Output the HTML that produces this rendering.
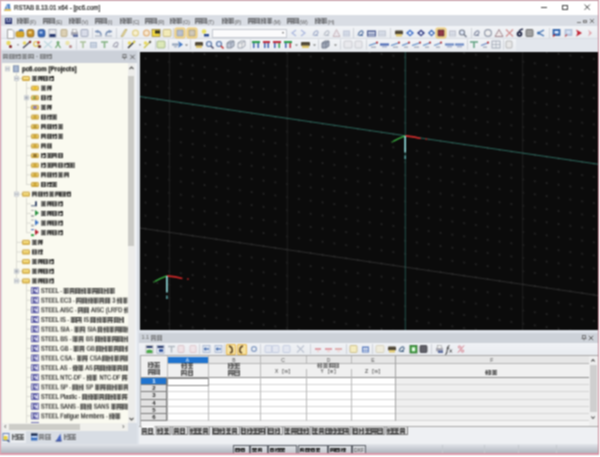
<!DOCTYPE html><html><head><meta charset="utf-8"><style>
*{margin:0;padding:0;box-sizing:border-box}
html,body{width:600px;height:457px;overflow:hidden;background:#fff;font-family:"Liberation Sans",sans-serif}
.a{position:absolute}
.cj{display:inline-block;vertical-align:top}
.g0{background:linear-gradient(currentColor,currentColor) 0 0/100% 1.3px no-repeat,linear-gradient(currentColor,currentColor) 0 100%/100% 1.3px no-repeat,linear-gradient(currentColor,currentColor) 0 0/1.3px 100% no-repeat,linear-gradient(currentColor,currentColor) 100% 0/1.3px 100% no-repeat,linear-gradient(currentColor,currentColor) 0 50%/100% 1.3px no-repeat,rgba(70,70,70,.35)}
.g1{background:linear-gradient(currentColor,currentColor) 10% 0/1.3px 100% no-repeat,linear-gradient(currentColor,currentColor) 100% 0/1.3px 100% no-repeat,linear-gradient(currentColor,currentColor) 100% 0/55% 1.3px no-repeat,linear-gradient(currentColor,currentColor) 100% 100%/55% 1.3px no-repeat,linear-gradient(currentColor,currentColor) 0 45%/100% 1.3px no-repeat,rgba(70,70,70,.35)}
.g2{background:linear-gradient(currentColor,currentColor) 0 0/100% 1.3px no-repeat,linear-gradient(currentColor,currentColor) 0 100%/100% 1.3px no-repeat,linear-gradient(currentColor,currentColor) 0 50%/100% 1.3px no-repeat,linear-gradient(currentColor,currentColor) 50% 0/1.3px 100% no-repeat,rgba(70,70,70,.35)}
.g3{background:linear-gradient(currentColor,currentColor) 0 0/1.3px 100% no-repeat,linear-gradient(currentColor,currentColor) 100% 0/1.3px 100% no-repeat,linear-gradient(currentColor,currentColor) 0 0/100% 1.3px no-repeat,linear-gradient(currentColor,currentColor) 50% 30%/1.3px 70% no-repeat,linear-gradient(currentColor,currentColor) 0 70%/100% 1.3px no-repeat,rgba(70,70,70,.35)}
.t{position:absolute;white-space:nowrap;font-size:6px;line-height:6px;color:#333}
.ic{position:absolute;border-radius:1px}
</style></head><body><svg width="0" height="0" style="position:absolute"><filter id="soft" x="0" y="0" width="100%" height="100%" color-interpolation-filters="sRGB"><feConvolveMatrix order="3" kernelMatrix="1 2 1 2 4 2 1 2 1" divisor="16" edgeMode="duplicate"/></filter></svg><div id="w" style="position:absolute;left:0;top:0;width:600px;height:457px;filter:url(#soft)">
<div class="a" style="left:0px;top:0px;width:599px;height:455px;border:1px solid #dca8b4;border-top-color:#c8a0aa;border-right-color:#cc8494;border-bottom:2px solid #dc98aa;background:#fff"></div>
<svg class="a" style="left:3px;top:3px" width="9" height="9" viewBox="0 0 9 9"><path d="M1 8 L3.5 1 H7 L7.5 8 z" fill="#5a8ac8"/><path d="M1 8 h7 v-2 h-6 z" fill="#e0c060"/><path d="M3.5 1 L4.5 6" stroke="#c8dcf0" stroke-width="1"/></svg>
<div class="t" style="left:14px;top:5px;font-size:7px;line-height:6px;color:#1a1a1a;-webkit-text-stroke:0.2px #1a1a1a;transform:scaleX(.88);transform-origin:0 0">RSTAB 8.13.01 x64 - [pc6.com]</div>
<div class="a" style="left:541px;top:7px;width:5.5px;height:0.8px;background:#444"></div>
<div class="a" style="left:562px;top:4.5px;width:5.5px;height:5.5px;border:0.8px solid #444"></div>
<svg class="a" style="left:0;top:0" width="600" height="457"><path d="M584.5 4.5 L589.9000000000001 9.9 M589.9000000000001 4.5 L584.5 9.9" stroke="#333" stroke-width="0.9"/></svg>
<div class="a" style="left:1px;top:15px;width:597px;height:11px;background:#d9dde4"></div>
<div class="a" style="left:4.5px;top:17.5px;width:7.5px;height:6px;background:#2a3470"></div>
<div class="a" style="left:5.5px;top:19.3px;width:2.5px;height:1px;background:#e8ecf8"></div>
<div class="a" style="left:8.5px;top:19.3px;width:2.5px;height:1px;background:#e8ecf8"></div>
<div class="a" style="left:5.5px;top:21.3px;width:5.5px;height:0.8px;background:#a0a8d0"></div>
<div class="t" style="left:17px;top:18px;"><i class="cj g1" style="width:5.5px;height:5.6px;margin-right:0.8px;color:#222;opacity:0.6"></i><i class="cj g2" style="width:5.5px;height:5.6px;margin-right:0.8px;color:#222;opacity:0.6"></i><span style="font-size:5px;line-height:5px;color:#555;vertical-align:top;margin-top:1.5px;display:inline-block">(F)</span></div>
<div class="t" style="left:43px;top:18px;"><i class="cj g3" style="width:5.5px;height:5.6px;margin-right:0.8px;color:#222;opacity:0.6"></i><i class="cj g0" style="width:5.5px;height:5.6px;margin-right:0.8px;color:#222;opacity:0.6"></i><span style="font-size:5px;line-height:5px;color:#555;vertical-align:top;margin-top:1.5px;display:inline-block">(E)</span></div>
<div class="t" style="left:69px;top:18px;"><i class="cj g1" style="width:5.5px;height:5.6px;margin-right:0.8px;color:#222;opacity:0.6"></i><i class="cj g2" style="width:5.5px;height:5.6px;margin-right:0.8px;color:#222;opacity:0.6"></i><span style="font-size:5px;line-height:5px;color:#555;vertical-align:top;margin-top:1.5px;display:inline-block">(V)</span></div>
<div class="t" style="left:95px;top:18px;"><i class="cj g3" style="width:5.5px;height:5.6px;margin-right:0.8px;color:#222;opacity:0.6"></i><i class="cj g0" style="width:5.5px;height:5.6px;margin-right:0.8px;color:#222;opacity:0.6"></i><span style="font-size:5px;line-height:5px;color:#555;vertical-align:top;margin-top:1.5px;display:inline-block">(I)</span></div>
<div class="t" style="left:120px;top:18px;"><i class="cj g1" style="width:5.5px;height:5.6px;margin-right:0.8px;color:#222;opacity:0.6"></i><i class="cj g2" style="width:5.5px;height:5.6px;margin-right:0.8px;color:#222;opacity:0.6"></i><span style="font-size:5px;line-height:5px;color:#555;vertical-align:top;margin-top:1.5px;display:inline-block">(C)</span></div>
<div class="t" style="left:145px;top:18px;"><i class="cj g3" style="width:5.5px;height:5.6px;margin-right:0.8px;color:#222;opacity:0.6"></i><i class="cj g0" style="width:5.5px;height:5.6px;margin-right:0.8px;color:#222;opacity:0.6"></i><span style="font-size:5px;line-height:5px;color:#555;vertical-align:top;margin-top:1.5px;display:inline-block">(R)</span></div>
<div class="t" style="left:170px;top:18px;"><i class="cj g1" style="width:5.5px;height:5.6px;margin-right:0.8px;color:#222;opacity:0.6"></i><i class="cj g2" style="width:5.5px;height:5.6px;margin-right:0.8px;color:#222;opacity:0.6"></i><span style="font-size:5px;line-height:5px;color:#555;vertical-align:top;margin-top:1.5px;display:inline-block">(O)</span></div>
<div class="t" style="left:195px;top:18px;"><i class="cj g3" style="width:5.5px;height:5.6px;margin-right:0.8px;color:#222;opacity:0.6"></i><i class="cj g0" style="width:5.5px;height:5.6px;margin-right:0.8px;color:#222;opacity:0.6"></i><span style="font-size:5px;line-height:5px;color:#555;vertical-align:top;margin-top:1.5px;display:inline-block">(T)</span></div>
<div class="t" style="left:222px;top:18px;"><i class="cj g1" style="width:5.5px;height:5.6px;margin-right:0.8px;color:#222;opacity:0.6"></i><i class="cj g2" style="width:5.5px;height:5.6px;margin-right:0.8px;color:#222;opacity:0.6"></i><span style="font-size:5px;line-height:5px;color:#555;vertical-align:top;margin-top:1.5px;display:inline-block">(P)</span></div>
<div class="t" style="left:248px;top:18px;"><i class="cj g3" style="width:5.5px;height:5.6px;margin-right:0.8px;color:#222;opacity:0.6"></i><i class="cj g0" style="width:5.5px;height:5.6px;margin-right:0.8px;color:#222;opacity:0.6"></i><i class="cj g1" style="width:5.5px;height:5.6px;margin-right:0.8px;color:#222;opacity:0.6"></i><i class="cj g2" style="width:5.5px;height:5.6px;margin-right:0.8px;color:#222;opacity:0.6"></i><span style="font-size:5px;line-height:5px;color:#555;vertical-align:top;margin-top:1.5px;display:inline-block">(M)</span></div>
<div class="t" style="left:287px;top:18px;"><i class="cj g3" style="width:5.5px;height:5.6px;margin-right:0.8px;color:#222;opacity:0.6"></i><i class="cj g0" style="width:5.5px;height:5.6px;margin-right:0.8px;color:#222;opacity:0.6"></i><span style="font-size:5px;line-height:5px;color:#555;vertical-align:top;margin-top:1.5px;display:inline-block">(W)</span></div>
<div class="t" style="left:315px;top:18px;"><i class="cj g1" style="width:5.5px;height:5.6px;margin-right:0.8px;color:#222;opacity:0.6"></i><i class="cj g2" style="width:5.5px;height:5.6px;margin-right:0.8px;color:#222;opacity:0.6"></i><span style="font-size:5px;line-height:5px;color:#555;vertical-align:top;margin-top:1.5px;display:inline-block">(H)</span></div>
<div class="a" style="left:577px;top:22px;width:4px;height:1px;background:#777"></div>
<div class="a" style="left:583px;top:20px;width:4px;height:3px;border:1px solid #777"></div>
<svg class="a" style="left:0;top:0" width="600" height="457"><path d="M590 19 L594 23 M594 19 L590 23" stroke="#666" stroke-width="0.9"/></svg>
<div class="a" style="left:1px;top:26px;width:597px;height:26px;background:#e3e7ed"></div>
<div class="a" style="left:1px;top:26px;width:596px;height:12px;background:linear-gradient(#f2f4f7,#e9ecf0)"></div>
<div class="a" style="left:1px;top:39px;width:515px;height:12px;background:linear-gradient(#f2f4f7,#e9ecf0)"></div>
<div class="a" style="left:1px;top:38px;width:597px;height:1px;background:#d8dce3"></div>
<svg class="a" style="left:0;top:0" width="600" height="60" viewBox="0 0 600 60"><path d="M7.5 29.5 h4.5 l2 2 v7 h-6.5 z" fill="#fbfbfb" stroke="#8a8a8a" stroke-width="0.8"/><rect x="16" y="31.5" width="8" height="5.5" rx="1.5" fill="#d8a828" stroke="#a07818" stroke-width="0.6"/><path d="M19 31.0 q2 -2 4.5 0" stroke="#3a6ab8" stroke-width="1.2" fill="none"/><rect x="27" y="29.5" width="7" height="7.5" rx="2" fill="#c89028" stroke="#6a4a10" stroke-width="0.6"/><rect x="28.5" y="31.5" width="3" height="2" fill="#f8e090"/><rect x="38" y="29.5" width="7" height="7.5" rx="2" fill="#3868b8" stroke="#20407a" stroke-width="0.6"/><rect x="39.5" y="31.5" width="3" height="2" fill="#b8d0f0"/><rect x="49" y="29.5" width="7" height="7.5" fill="#e8e8ec" stroke="#9098a8" stroke-width="0.7"/><rect x="49.5" y="34.0" width="6" height="3" fill="#2a3a70"/><rect x="61" y="29.5" width="6" height="7" rx="1" fill="#dcd0b4" stroke="#a89870" stroke-width="0.7"/><rect x="71" y="31.5" width="7" height="4" rx="1" fill="#a8a8b4"/><rect x="72.5" y="29.5" width="4" height="3" fill="#f4f4f4" stroke="#909090" stroke-width="0.5"/><rect x="73" y="34.5" width="5" height="2.5" fill="#6070a0"/><rect x="81" y="29.5" width="7" height="7" rx="1" fill="#d8dce8" stroke="#8890a8" stroke-width="0.7"/><rect x="92" y="28" width="0.8" height="10" fill="#c8ccd4"/><path d="M101 35.5 q0 -4 -3 -4 h-3" stroke="#7088b0" stroke-width="1.4" fill="none"/><path d="M96 31.5 l2.2 -2 v4 z" fill="#7088b0"/><rect x="95" y="35.5" width="7" height="1" fill="#a0a8b8"/><path d="M106 35.5 q0 -4 3 -4 h3" stroke="#7088b0" stroke-width="1.4" fill="none"/><path d="M111 31.5 l-2.2 -2 v4 z" fill="#7088b0"/><rect x="105" y="35.5" width="7" height="1" fill="#a0a8b8"/><rect x="116" y="28" width="0.8" height="10" fill="#c8ccd4"/><path d="M121 36.5 l4 -7 h2 l-4 7 z" fill="#f0e0a0" stroke="#a09050" stroke-width="0.6"/><circle cx="135.5" cy="33" r="2.9" fill="#f8f0d0" stroke="#e0d088" stroke-width="1.2"/><circle cx="146.5" cy="33" r="2.9" fill="#f8e8d0" stroke="#e0b078" stroke-width="1.2"/><rect x="152" y="29.5" width="8" height="7" fill="#f0d840" stroke="#806820" stroke-width="0.6"/><rect x="155" y="30.5" width="5" height="3" fill="#303020"/><rect x="163" y="29.5" width="8" height="7" rx="1" fill="#f2eab8" stroke="#b8a868" stroke-width="0.7"/><rect x="173" y="28" width="0.8" height="10" fill="#c8ccd4"/><rect x="175" y="28" width="10" height="10" rx="1.5" fill="#f6e2a0" stroke="#e8b850" stroke-width="0.8"/><rect x="177" y="30" width="6" height="6" fill="#b8c0d0" stroke="#808898" stroke-width="0.6"/><rect x="187" y="28" width="10" height="10" rx="1.5" fill="#f6e2a0" stroke="#e8b850" stroke-width="0.8"/><rect x="189" y="30" width="6" height="6" fill="#d0c8b8" stroke="#908060" stroke-width="0.6"/><circle cx="204" cy="31.5" r="2.3" fill="#e8e060"/><rect x="204" y="34" width="5" height="2.5" fill="#2a4a90"/><path d="M296 30.0 l-4 3 l4 3" stroke="#98a8d8" stroke-width="1.2" fill="none" opacity="0.8"/><path d="M301 30.0 l4 3 l-4 3" stroke="#98a8d8" stroke-width="1.2" fill="none" opacity="0.8"/><path d="M313 35.5 c1 -5 5 -6 5 -3 c0 2 -3 3 -4 3 h4" stroke="#8090b8" stroke-width="1.2" fill="none" opacity="0.7"/><path d="M324 35.5 c1 -5 5 -6 5 -3 c0 2 -3 3 -4 3 h4" stroke="#9098a8" stroke-width="1.2" fill="none" opacity="0.6"/><path d="M336.5 29.5 L340 36.5 H333 z" fill="#e8e0e8" stroke="#b09098" stroke-width="1" opacity="0.6"/><rect x="343" y="30.5" width="7" height="6" fill="#a8b0c8" opacity="0.6"/><rect x="344" y="32.0" width="5" height="1.5" fill="#e8eef8" opacity="0.6"/><rect x="344" y="34.5" width="5" height="1" fill="#e8eef8" opacity="0.6"/><rect x="353" y="28" width="0.8" height="10" fill="#c8ccd4"/><path d="M358 35.5 c1 -5 5 -6 5 -3 c0 2 -3 3 -4 3 h4" stroke="#5070a0" stroke-width="1.2" fill="none"/><rect x="367" y="30.5" width="9" height="6" fill="#4a5a90"/><rect x="368" y="32.0" width="7" height="1.5" fill="#e8eef8"/><rect x="368" y="34.5" width="7" height="1" fill="#e8eef8"/><rect x="378" y="30.5" width="8" height="6" fill="#b0b8c8" opacity="0.7"/><rect x="379" y="32.0" width="6" height="1.5" fill="#e8eef8" opacity="0.7"/><rect x="379" y="34.5" width="6" height="1" fill="#e8eef8" opacity="0.7"/><rect x="390" y="28" width="0.8" height="10" fill="#c8ccd4"/><rect x="395" y="30.5" width="8" height="4" rx="1" fill="#504838"/><rect x="396" y="34.0" width="6" height="2.5" fill="#e0c870"/><path d="M410.0 29.5 L414 33 L410.0 36.5 L406 33 z" fill="#4070c8"/><circle cx="410.0" cy="33" r="1.5" fill="#e8f0ff"/><path d="M421.0 29.5 L425 33 L421.0 36.5 L417 33 z" fill="#303a80"/><circle cx="421.0" cy="33" r="1.5" fill="#e8f0ff"/><path d="M431.5 29.5 L435 33 L431.5 36.5 L428 33 z" fill="#3060b0"/><circle cx="431.5" cy="33" r="1.5" fill="#e8f0ff"/><rect x="436" y="28" width="10" height="10" rx="1.5" fill="#f6e2a0" stroke="#e8b850" stroke-width="0.8"/><rect x="438" y="30" width="6" height="6" fill="#903848" stroke="#402020" stroke-width="0.6"/><rect x="449" y="30.5" width="7" height="6" fill="#b8bcc8" opacity="0.8"/><rect x="450" y="32.0" width="5" height="1.5" fill="#e8eef8" opacity="0.8"/><rect x="450" y="34.5" width="5" height="1" fill="#e8eef8" opacity="0.8"/><circle cx="462" cy="32.5" r="2.5" fill="#e0e8f8" stroke="#707888" stroke-width="1.1"/><path d="M464 34.5 l2.5 2.5" stroke="#707888" stroke-width="1.4"/><rect x="471" y="28" width="0.8" height="10" fill="#c8ccd4"/><path d="M474 35.5 c1 -5 5 -6 5 -3 c0 2 -3 3 -4 3 h4" stroke="#8088a0" stroke-width="1.2" fill="none"/><circle cx="488.0" cy="33" r="3.4" fill="#f0f0f0" stroke="#9098a8" stroke-width="1.2"/><path d="M499.0 29.5 L503 36.5 H495 z" fill="#f0e8e8" stroke="#a08890" stroke-width="1"/><path d="M506 29.5 L513 36.5 M513 29.5 L506 36.5" stroke="#d08888" stroke-width="1.1"/><circle cx="519.5" cy="34" r="2.8" fill="#1a2040"/><path d="M519 31.5 q2 -3 4 -2" stroke="#1a2040" stroke-width="1.4" fill="none"/><circle cx="519.5" cy="34" r="1" fill="#e0e0e0"/><rect x="526" y="29.5" width="7" height="7" rx="1" fill="#a0a0a0" stroke="#505050" stroke-width="0.7"/><path d="M544 30.0 L538.5 33 L544 36.0" stroke="#4070b0" stroke-width="1.4" fill="none"/><circle cx="538.5" cy="33" r="1.5" fill="#4070b0"/><rect x="549" y="28" width="0.8" height="10" fill="#c8ccd4"/><rect x="553" y="29.5" width="7" height="6" fill="#2a68b8" stroke="#1a4890" stroke-width="0.6"/><rect x="554.5" y="31.0" width="4" height="2.5" fill="#e8f0ff"/><path d="M553 36.5 l2 -2" stroke="#c02020" stroke-width="1.2"/><rect x="565" y="29.5" width="7" height="6" fill="#a0b8d8" stroke="#8098c0" stroke-width="0.6" opacity="0.7"/><rect x="566.5" y="31.0" width="4" height="2.5" fill="#e8f0ff" opacity="0.7"/><path d="M565 36.5 l2 -2" stroke="#c02020" stroke-width="1.2" opacity="0.7"/><path d="M576 29.5 L582 33 L576 36.5 L577.5 33 z" fill="#c02030"/><path d="M588 29.5 L592 33 L588 36.5 L589.5 33 z" fill="#e0a0a8"/><circle cx="8.5" cy="43.0" r="2.2" fill="#e8d860"/><circle cx="10.5" cy="46.5" r="1.5" fill="#802020"/><path d="M17 44.8 h2" stroke="#707070" stroke-width="0.8"/><path d="M23 48.0 L31 41.0" stroke="#404050" stroke-width="1.3"/><circle cx="24.5" cy="43.0" r="1.8" fill="#e8d860"/><circle cx="30" cy="42.0" r="1.2" fill="#802020"/><circle cx="36" cy="44.0" r="2.3" fill="none" stroke="#e0c860" stroke-width="1.3"/><circle cx="39.5" cy="46.5" r="1.6" fill="#603030"/><circle cx="38.5" cy="42.5" r="1.2" fill="#c02020"/><path d="M44 41.0 L52 48.0 M52 41.0 L44 48.0" stroke="#b0d0d8" stroke-width="1.1" opacity="0.8"/><circle cx="58.0" cy="42.5" r="1.5" fill="#70a870"/><path d="M55.5 48.0 L58.0 44.0 L60.5 48.0" stroke="#70a870" stroke-width="1.3" fill="none"/><circle cx="67.5" cy="43.0" r="2.2" fill="#e8d860" opacity="0.5"/><circle cx="70.5" cy="46.5" r="1.5" fill="#802020" opacity="0.5"/><rect x="76" y="39.5" width="0.8" height="10" fill="#c8ccd4"/><path d="M80 42.0 H86 M83.0 42.0 V48.0" stroke="#a8c098" stroke-width="1.5"/><rect x="90" y="42.0" width="7" height="6" fill="#98a8c0" opacity="0.7"/><rect x="91" y="43.5" width="5" height="1.5" fill="#e8eef8" opacity="0.7"/><rect x="91" y="46.0" width="5" height="1" fill="#e8eef8" opacity="0.7"/><path d="M101 42.0 H108 M104.5 42.0 V48.0" stroke="#80b080" stroke-width="1.5"/><path d="M113 47.0 c1 -5 5 -6 5 -3 c0 2 -3 3 -4 3 h4" stroke="#a0a0b0" stroke-width="1.2" fill="none"/><rect x="122" y="39.5" width="0.8" height="10" fill="#c8ccd4"/><path d="M128 48.0 L135 41.0" stroke="#202020" stroke-width="1.3"/><circle cx="129.5" cy="43.0" r="1.8" fill="#e8d860"/><circle cx="134" cy="42.0" r="1.2" fill="#e0d040"/><path d="M139 44.8 h2" stroke="#707070" stroke-width="0.8"/><path d="M144 48.0 L151 41.0" stroke="#c8c040" stroke-width="1.3"/><circle cx="145.5" cy="43.0" r="1.8" fill="#e8d860"/><circle cx="150" cy="42.0" r="1.2" fill="#606060"/><rect x="155" y="39.5" width="0.8" height="10" fill="#c8ccd4"/><rect x="157" y="41.0" width="8" height="7" rx="1" fill="#dce8b8" stroke="#90a870" stroke-width="0.7"/><rect x="168" y="39.5" width="0.8" height="10" fill="#c8ccd4"/><rect x="172" y="43.5" width="7" height="2" fill="#90a0b8"/><rect x="174" y="46.0" width="3" height="1.5" fill="#b0b8c8"/><path d="M178 41.0 L183 44.5 L178 48.0 L179.5 44.5 z" fill="#3a70c0"/><path d="M185 44.5 h3 l-1.5 1.5 z" fill="#606060"/><rect x="190" y="39.5" width="0.8" height="10" fill="#c8ccd4"/><rect x="195" y="42.0" width="8" height="4" rx="1" fill="#504838"/><rect x="196" y="45.5" width="6" height="2.5" fill="#e0c870"/><circle cx="209" cy="44.0" r="2.5" fill="#e0e8f8" stroke="#5070a0" stroke-width="1.1"/><path d="M211 46.0 l2.5 2.5" stroke="#404060" stroke-width="1.4"/><circle cx="219" cy="44.0" r="2.5" fill="#e0e8f8" stroke="#5070a0" stroke-width="1.1"/><path d="M221 46.0 l2.5 2.5" stroke="#c02020" stroke-width="1.4"/><path d="M227 43.0 l3 -2 h4 v5 l-3 2 h-4 z" fill="#c0c8d8" stroke="#707888" stroke-width="0.8"/><path d="M227 43.0 h4 l3 -2 M231 43.0 v5" stroke="#707888" stroke-width="0.6" fill="none"/><path d="M238 43.0 l3 -2 h4 v5 l-3 2 h-4 z" fill="#f0f0f0" stroke="#8890a0" stroke-width="0.8"/><path d="M238 43.0 h4 l3 -2 M242 43.0 v5" stroke="#8890a0" stroke-width="0.6" fill="none"/><rect x="250" y="39.5" width="0.8" height="10" fill="#c8ccd4"/><rect x="252" y="41.0" width="8" height="2.2" fill="#30a050"/><rect x="253" y="43.0" width="1.5" height="5" fill="#3a60b0"/><rect x="257.5" y="43.0" width="1.5" height="5" fill="#3a60b0"/><rect x="263" y="41.0" width="7" height="2.2" fill="#c03040"/><rect x="264" y="43.0" width="1.5" height="5" fill="#3a60b0"/><rect x="267.5" y="43.0" width="1.5" height="5" fill="#3a60b0"/><rect x="273" y="41.0" width="8" height="2.2" fill="#c03040"/><rect x="274" y="43.0" width="1.5" height="5" fill="#3a60b0"/><rect x="278.5" y="43.0" width="1.5" height="5" fill="#30a050"/><rect x="284" y="41.0" width="8" height="2.2" fill="#30a050"/><rect x="285" y="43.0" width="1.5" height="5" fill="#3a60b0"/><rect x="289.5" y="43.0" width="1.5" height="5" fill="#c03040"/><path d="M295 44.5 h3 l-1.5 1.5 z" fill="#606060"/><rect x="301" y="42.0" width="9" height="4" rx="1" fill="#504838"/><rect x="302" y="45.5" width="7" height="2.5" fill="#e0c870"/><path d="M313 44.5 h3 l-1.5 1.5 z" fill="#606060"/><rect x="318" y="39.5" width="0.8" height="10" fill="#c8ccd4"/><path d="M322 43.0 l3 -2 h4 v5 l-3 2 h-4 z" fill="#a0a8b8" stroke="#606878" stroke-width="0.8"/><path d="M322 43.0 h4 l3 -2 M326 43.0 v5" stroke="#606878" stroke-width="0.6" fill="none"/><path d="M334 44.5 h3 l-1.5 1.5 z" fill="#606060"/><rect x="340" y="39.5" width="0.8" height="10" fill="#c8ccd4"/><rect x="344" y="41.0" width="8" height="7" rx="1" fill="#e8e8ec" stroke="#b0b0b8" stroke-width="0.7" opacity="0.8"/><rect x="355" y="41.0" width="7" height="7" rx="1" fill="#e8e8ec" stroke="#b0b0b8" stroke-width="0.7" opacity="0.8"/><rect x="366" y="39.5" width="0.8" height="10" fill="#c8ccd4"/><path d="M369 45.5 L378 42.5" stroke="#5080c0" stroke-width="1.3"/><circle cx="377" cy="42.5" r="1" fill="#c02020"/><rect x="371" y="46.5" width="5" height="1.3" fill="#a0a8b8"/><rect x="380" y="43.5" width="9" height="2" fill="#4060b0"/><rect x="382" y="46.0" width="5" height="1.5" fill="#b0b8d0"/><path d="M391 45.5 L400 42.5" stroke="#5080c0" stroke-width="1.3"/><circle cx="399" cy="42.5" r="1" fill="#c02020"/><rect x="393" y="46.5" width="5" height="1.3" fill="#a0a8b8"/><path d="M402 45.5 L410 42.5" stroke="#5080c0" stroke-width="1.3"/><circle cx="409" cy="42.5" r="1" fill="#c02020"/><rect x="404" y="46.5" width="4" height="1.3" fill="#a0a8b8"/><path d="M412 45.5 L421 42.5" stroke="#5080c0" stroke-width="1.3"/><circle cx="420" cy="42.5" r="1" fill="#c02020"/><rect x="414" y="46.5" width="5" height="1.3" fill="#a0a8b8"/><path d="M423 45.5 L431 42.5" stroke="#5080c0" stroke-width="1.3"/><circle cx="430" cy="42.5" r="1" fill="#c02020"/><rect x="425" y="46.5" width="4" height="1.3" fill="#a0a8b8"/><path d="M434 45.5 L442 42.5" stroke="#6088c0" stroke-width="1.3"/><circle cx="441" cy="42.5" r="1" fill="#c02020"/><rect x="436" y="46.5" width="4" height="1.3" fill="#a0a8b8"/><rect x="445" y="43.5" width="9" height="2" fill="#6080c0"/><rect x="447" y="46.0" width="5" height="1.5" fill="#b0b8d0"/><rect x="455" y="43.5" width="9" height="2" fill="#6080c0"/><rect x="457" y="46.0" width="5" height="1.5" fill="#b0b8d0"/><rect x="467" y="39.5" width="0.8" height="10" fill="#c8ccd4"/><path d="M470 42.0 H478 M474.0 42.0 V48.0" stroke="#60a080" stroke-width="1.5"/><path d="M481 45.5 L489 42.5" stroke="#6080c0" stroke-width="1.3"/><circle cx="488" cy="42.5" r="1" fill="#c02020"/><rect x="483" y="46.5" width="4" height="1.3" fill="#a0a8b8"/><rect x="492" y="41.0" width="8" height="7" fill="none" stroke="#9098a8" stroke-width="0.8"/><path d="M496.0 41.0 V48.0 M492 44.5 H500" stroke="#9098a8" stroke-width="0.6"/><rect x="503" y="39.5" width="0.8" height="10" fill="#c8ccd4"/><rect x="506" y="41.0" width="6" height="7" rx="1" fill="#e8e8e8" stroke="#a0a0a0" stroke-width="0.7"/></svg>
<div class="a" style="left:212px;top:28.5px;width:75px;height:9px;background:#fbfbfc;border:1px solid #c4c8d0"></div>
<div class="a" style="left:282px;top:32px;width:3px;height:2px;border-top:2px solid #666;border-left:1.5px solid transparent;border-right:1.5px solid transparent;width:0;height:0"></div>
<div class="a" style="left:1px;top:50px;width:139px;height:394px;background:#d8dde4"></div>
<div class="a" style="left:2px;top:51px;width:135px;height:12px;background:#ccd1d9"></div>
<div class="t" style="left:2.5px;top:53.5px;"><i class="cj g3" style="width:5.8px;height:5.6px;margin-right:0.6px;color:#444;opacity:0.55"></i><i class="cj g0" style="width:5.8px;height:5.6px;margin-right:0.6px;color:#444;opacity:0.55"></i><i class="cj g1" style="width:5.8px;height:5.6px;margin-right:0.6px;color:#444;opacity:0.55"></i><i class="cj g2" style="width:5.8px;height:5.6px;margin-right:0.6px;color:#444;opacity:0.55"></i><i class="cj g3" style="width:5.8px;height:5.6px;margin-right:0.6px;color:#444;opacity:0.55"></i><span style="color:#555;font-size:6px;line-height:5.5px;vertical-align:top;white-space:pre"> - </span><i class="cj g0" style="width:5.8px;height:5.6px;margin-right:0.6px;color:#444;opacity:0.55"></i><i class="cj g1" style="width:5.8px;height:5.6px;margin-right:0.6px;color:#444;opacity:0.55"></i></div>
<svg class="a" style="left:0;top:0" width="600" height="457"><rect x="123.0" y="54.5" width="3" height="3" fill="none" stroke="#666" stroke-width="0.8"/><path d="M122.0 57.5 h5 M124.5 57.5 v2" stroke="#666" stroke-width="0.8"/></svg>
<svg class="a" style="left:0;top:0" width="600" height="457"><path d="M130.3 54.8 L134.7 59.2 M134.7 54.8 L130.3 59.2" stroke="#555" stroke-width="0.9"/></svg>
<div class="a" style="left:2px;top:63px;width:135px;height:360px;background:#fafaf0"></div>
<div class="a" style="left:0px;top:0px;width:600px;height:457px;overflow:hidden;clip-path:inset(63px 0 34px 0)"><div class="a" style="left:16px;top:73px;width:1px;height:205px;border-left:1px solid #dcdcd4"></div><div class="a" style="left:26px;top:82px;width:1px;height:102px;border-left:1px solid #dcdcd4"></div><div class="a" style="left:26px;top:198px;width:1px;height:34px;border-left:1px solid #dcdcd4"></div><div class="a" style="left:26px;top:283px;width:1px;height:140px;border-left:1px solid #dcdcd4"></div><div class="a" style="left:0;top:68px;width:140px;height:1px;transform:perspective(1000px) translateZ(0.001px) translateY(0.3px);transform-origin:0 0"><div class="a" style="left:5.2px;top:-2.5px;width:5px;height:5px;border:1px solid #c8ccd0;background:#f0f2f4"></div><div class="a" style="left:6.2px;top:-0.5px;width:3px;height:1px;background:#9aa0a8"></div><div class="a" style="left:13px;top:-3.5px;width:6px;height:7px;background:#a8b8d0;border:1px solid #8090b0"></div><div class="t" style="left:22px;top:-3.5px;font-size:6.6px;line-height:7px;font-weight:bold;color:#000;-webkit-text-stroke:0.15px #000;transform:scaleX(.925);transform-origin:0 0">pc6.com [Projects]</div></div><div class="a" style="left:0;top:77px;width:140px;height:1px;transform:perspective(1000px) translateZ(0.001px) translateY(0.94px);transform-origin:0 0"><div class="a" style="left:16px;top:0px;width:6px;height:1px;background:#dcdcd4"></div><div class="a" style="left:13.5px;top:-2.5px;width:5px;height:5px;border:1px solid #c8ccd0;background:#f0f2f4"></div><div class="a" style="left:14.5px;top:-0.5px;width:3px;height:1px;background:#9aa0a8"></div><div class="a" style="left:22px;top:-2.5px;width:7.5px;height:5.5px;background:linear-gradient(#fceca0,#e4c050);border-radius:1.5px;border:0.5px solid #c8a040"></div><div class="t" style="left:32px;top:-2.5px;line-height:5.5px"><i class="cj g2" style="width:5.1px;height:5.5px;margin-right:0.6px;color:#111;opacity:0.85"></i><i class="cj g3" style="width:5.1px;height:5.5px;margin-right:0.6px;color:#111;opacity:0.85"></i><i class="cj g0" style="width:5.1px;height:5.5px;margin-right:0.6px;color:#111;opacity:0.85"></i><i class="cj g1" style="width:5.1px;height:5.5px;margin-right:0.6px;color:#111;opacity:0.85"></i></div></div><div class="a" style="left:0;top:87px;width:140px;height:1px;transform:perspective(1000px) translateZ(0.001px) translateY(0.58px);transform-origin:0 0"><div class="a" style="left:26px;top:0px;width:5px;height:1px;background:#dcdcd4"></div><div class="a" style="left:31px;top:-2.5px;width:7.5px;height:5.5px;background:linear-gradient(#fceca0,#e4c050);border-radius:1.5px;border:0.5px solid #c8a040"></div><div class="a" style="left:33px;top:-1.2px;width:3.5px;height:3px;background:#f0c020;opacity:.85;border-radius:1px"></div><div class="t" style="left:41px;top:-2.5px;line-height:5.5px"><i class="cj g2" style="width:5.1px;height:5.5px;margin-right:0.6px;color:#111;opacity:0.85"></i><i class="cj g3" style="width:5.1px;height:5.5px;margin-right:0.6px;color:#111;opacity:0.85"></i></div></div><div class="a" style="left:0;top:97px;width:140px;height:1px;transform:perspective(1000px) translateZ(0.001px) translateY(0.22px);transform-origin:0 0"><div class="a" style="left:26px;top:0px;width:5px;height:1px;background:#dcdcd4"></div><div class="a" style="left:23.5px;top:-2.5px;width:5px;height:5px;border:1px solid #c8ccd0;background:#f0f2f4"></div><div class="a" style="left:24.5px;top:-0.5px;width:3px;height:1px;background:#9aa0a8"></div><div class="a" style="left:25.5px;top:-1.5px;width:1px;height:3px;background:#9aa0a8"></div><div class="a" style="left:31px;top:-2.5px;width:7.5px;height:5.5px;background:linear-gradient(#fceca0,#e4c050);border-radius:1.5px;border:0.5px solid #c8a040"></div><div class="a" style="left:33px;top:-1.2px;width:3.5px;height:3px;background:linear-gradient(90deg,#50a050,#e08830);opacity:.85;border-radius:1px"></div><div class="t" style="left:41px;top:-2.5px;line-height:5.5px"><i class="cj g0" style="width:5.1px;height:5.5px;margin-right:0.6px;color:#111;opacity:0.85"></i><i class="cj g1" style="width:5.1px;height:5.5px;margin-right:0.6px;color:#111;opacity:0.85"></i></div></div><div class="a" style="left:0;top:106px;width:140px;height:1px;transform:perspective(1000px) translateZ(0.001px) translateY(0.86px);transform-origin:0 0"><div class="a" style="left:26px;top:0px;width:5px;height:1px;background:#dcdcd4"></div><div class="a" style="left:31px;top:-2.5px;width:7.5px;height:5.5px;background:linear-gradient(#fceca0,#e4c050);border-radius:1.5px;border:0.5px solid #c8a040"></div><div class="a" style="left:33px;top:-1.2px;width:3.5px;height:3px;background:linear-gradient(90deg,#6070c0,#a070b0);opacity:.85;border-radius:1px"></div><div class="t" style="left:41px;top:-2.5px;line-height:5.5px"><i class="cj g2" style="width:5.1px;height:5.5px;margin-right:0.6px;color:#111;opacity:0.85"></i><i class="cj g3" style="width:5.1px;height:5.5px;margin-right:0.6px;color:#111;opacity:0.85"></i></div></div><div class="a" style="left:0;top:116px;width:140px;height:1px;transform:perspective(1000px) translateZ(0.001px) translateY(0.5px);transform-origin:0 0"><div class="a" style="left:26px;top:0px;width:5px;height:1px;background:#dcdcd4"></div><div class="a" style="left:31px;top:-2.5px;width:7.5px;height:5.5px;background:linear-gradient(#fceca0,#e4c050);border-radius:1.5px;border:0.5px solid #c8a040"></div><div class="a" style="left:33px;top:-1.2px;width:3.5px;height:3px;background:#c8a030;opacity:.85;border-radius:1px"></div><div class="t" style="left:41px;top:-2.5px;line-height:5.5px"><i class="cj g0" style="width:5.1px;height:5.5px;margin-right:0.6px;color:#111;opacity:0.85"></i><i class="cj g1" style="width:5.1px;height:5.5px;margin-right:0.6px;color:#111;opacity:0.85"></i><i class="cj g2" style="width:5.1px;height:5.5px;margin-right:0.6px;color:#111;opacity:0.85"></i></div></div><div class="a" style="left:0;top:126px;width:140px;height:1px;transform:perspective(1000px) translateZ(0.001px) translateY(0.14px);transform-origin:0 0"><div class="a" style="left:26px;top:0px;width:5px;height:1px;background:#dcdcd4"></div><div class="a" style="left:31px;top:-2.5px;width:7.5px;height:5.5px;background:linear-gradient(#fceca0,#e4c050);border-radius:1.5px;border:0.5px solid #c8a040"></div><div class="a" style="left:33px;top:-1.2px;width:3.5px;height:3px;background:#b09030;opacity:.85;border-radius:1px"></div><div class="t" style="left:41px;top:-2.5px;line-height:5.5px"><i class="cj g3" style="width:5.1px;height:5.5px;margin-right:0.6px;color:#111;opacity:0.85"></i><i class="cj g0" style="width:5.1px;height:5.5px;margin-right:0.6px;color:#111;opacity:0.85"></i><i class="cj g1" style="width:5.1px;height:5.5px;margin-right:0.6px;color:#111;opacity:0.85"></i><i class="cj g2" style="width:5.1px;height:5.5px;margin-right:0.6px;color:#111;opacity:0.85"></i></div></div><div class="a" style="left:0;top:135px;width:140px;height:1px;transform:perspective(1000px) translateZ(0.001px) translateY(0.78px);transform-origin:0 0"><div class="a" style="left:26px;top:0px;width:5px;height:1px;background:#dcdcd4"></div><div class="a" style="left:31px;top:-2.5px;width:7.5px;height:5.5px;background:linear-gradient(#fceca0,#e4c050);border-radius:1.5px;border:0.5px solid #c8a040"></div><div class="a" style="left:33px;top:-1.2px;width:3.5px;height:3px;background:#c8a030;opacity:.85;border-radius:1px"></div><div class="t" style="left:41px;top:-2.5px;line-height:5.5px"><i class="cj g3" style="width:5.1px;height:5.5px;margin-right:0.6px;color:#111;opacity:0.85"></i><i class="cj g0" style="width:5.1px;height:5.5px;margin-right:0.6px;color:#111;opacity:0.85"></i><i class="cj g1" style="width:5.1px;height:5.5px;margin-right:0.6px;color:#111;opacity:0.85"></i><i class="cj g2" style="width:5.1px;height:5.5px;margin-right:0.6px;color:#111;opacity:0.85"></i></div></div><div class="a" style="left:0;top:145px;width:140px;height:1px;transform:perspective(1000px) translateZ(0.001px) translateY(0.42px);transform-origin:0 0"><div class="a" style="left:26px;top:0px;width:5px;height:1px;background:#dcdcd4"></div><div class="a" style="left:31px;top:-2.5px;width:7.5px;height:5.5px;background:linear-gradient(#fceca0,#e4c050);border-radius:1.5px;border:0.5px solid #c8a040"></div><div class="a" style="left:33px;top:-1.2px;width:3.5px;height:3px;background:#c8a030;opacity:.85;border-radius:1px"></div><div class="t" style="left:41px;top:-2.5px;line-height:5.5px"><i class="cj g3" style="width:5.1px;height:5.5px;margin-right:0.6px;color:#111;opacity:0.85"></i><i class="cj g0" style="width:5.1px;height:5.5px;margin-right:0.6px;color:#111;opacity:0.85"></i></div></div><div class="a" style="left:0;top:155px;width:140px;height:1px;transform:perspective(1000px) translateZ(0.001px) translateY(0.06px);transform-origin:0 0"><div class="a" style="left:26px;top:0px;width:5px;height:1px;background:#dcdcd4"></div><div class="a" style="left:31px;top:-2.5px;width:7.5px;height:5.5px;background:linear-gradient(#fceca0,#e4c050);border-radius:1.5px;border:0.5px solid #c8a040"></div><div class="a" style="left:33px;top:-1.2px;width:3.5px;height:3px;background:#806020;opacity:.85;border-radius:1px"></div><div class="t" style="left:41px;top:-2.5px;line-height:5.5px"><i class="cj g1" style="width:5.1px;height:5.5px;margin-right:0.6px;color:#111;opacity:0.85"></i><i class="cj g2" style="width:5.1px;height:5.5px;margin-right:0.6px;color:#111;opacity:0.85"></i><i class="cj g3" style="width:5.1px;height:5.5px;margin-right:0.6px;color:#111;opacity:0.85"></i><i class="cj g0" style="width:5.1px;height:5.5px;margin-right:0.6px;color:#111;opacity:0.85"></i></div></div><div class="a" style="left:0;top:164px;width:140px;height:1px;transform:perspective(1000px) translateZ(0.001px) translateY(0.7px);transform-origin:0 0"><div class="a" style="left:26px;top:0px;width:5px;height:1px;background:#dcdcd4"></div><div class="a" style="left:31px;top:-2.5px;width:7.5px;height:5.5px;background:linear-gradient(#fceca0,#e4c050);border-radius:1.5px;border:0.5px solid #c8a040"></div><div class="a" style="left:33px;top:-1.2px;width:3.5px;height:3px;background:#c8a030;opacity:.85;border-radius:1px"></div><div class="t" style="left:41px;top:-2.5px;line-height:5.5px"><i class="cj g1" style="width:5.1px;height:5.5px;margin-right:0.6px;color:#111;opacity:0.85"></i><i class="cj g2" style="width:5.1px;height:5.5px;margin-right:0.6px;color:#111;opacity:0.85"></i><i class="cj g3" style="width:5.1px;height:5.5px;margin-right:0.6px;color:#111;opacity:0.85"></i><i class="cj g0" style="width:5.1px;height:5.5px;margin-right:0.6px;color:#111;opacity:0.85"></i><i class="cj g1" style="width:5.1px;height:5.5px;margin-right:0.6px;color:#111;opacity:0.85"></i><i class="cj g2" style="width:5.1px;height:5.5px;margin-right:0.6px;color:#111;opacity:0.85"></i></div></div><div class="a" style="left:0;top:174px;width:140px;height:1px;transform:perspective(1000px) translateZ(0.001px) translateY(0.34px);transform-origin:0 0"><div class="a" style="left:26px;top:0px;width:5px;height:1px;background:#dcdcd4"></div><div class="a" style="left:31px;top:-2.5px;width:7.5px;height:5.5px;background:linear-gradient(#fceca0,#e4c050);border-radius:1.5px;border:0.5px solid #c8a040"></div><div class="a" style="left:33px;top:-1.2px;width:3.5px;height:3px;background:#c8a030;opacity:.85;border-radius:1px"></div><div class="t" style="left:41px;top:-2.5px;line-height:5.5px"><i class="cj g3" style="width:5.1px;height:5.5px;margin-right:0.6px;color:#111;opacity:0.85"></i><i class="cj g0" style="width:5.1px;height:5.5px;margin-right:0.6px;color:#111;opacity:0.85"></i><i class="cj g1" style="width:5.1px;height:5.5px;margin-right:0.6px;color:#111;opacity:0.85"></i><i class="cj g2" style="width:5.1px;height:5.5px;margin-right:0.6px;color:#111;opacity:0.85"></i><i class="cj g3" style="width:5.1px;height:5.5px;margin-right:0.6px;color:#111;opacity:0.85"></i></div></div><div class="a" style="left:0;top:183px;width:140px;height:1px;transform:perspective(1000px) translateZ(0.001px) translateY(0.98px);transform-origin:0 0"><div class="a" style="left:26px;top:0px;width:5px;height:1px;background:#dcdcd4"></div><div class="a" style="left:31px;top:-2.5px;width:7.5px;height:5.5px;background:linear-gradient(#fceca0,#e4c050);border-radius:1.5px;border:0.5px solid #c8a040"></div><div class="a" style="left:33px;top:-1.2px;width:3.5px;height:3px;background:#c8a030;opacity:.85;border-radius:1px"></div><div class="t" style="left:41px;top:-2.5px;line-height:5.5px"><i class="cj g0" style="width:5.1px;height:5.5px;margin-right:0.6px;color:#111;opacity:0.85"></i><i class="cj g1" style="width:5.1px;height:5.5px;margin-right:0.6px;color:#111;opacity:0.85"></i><i class="cj g2" style="width:5.1px;height:5.5px;margin-right:0.6px;color:#111;opacity:0.85"></i></div></div><div class="a" style="left:0;top:193px;width:140px;height:1px;transform:perspective(1000px) translateZ(0.001px) translateY(0.62px);transform-origin:0 0"><div class="a" style="left:16px;top:0px;width:6px;height:1px;background:#dcdcd4"></div><div class="a" style="left:13.5px;top:-2.5px;width:5px;height:5px;border:1px solid #c8ccd0;background:#f0f2f4"></div><div class="a" style="left:14.5px;top:-0.5px;width:3px;height:1px;background:#9aa0a8"></div><div class="a" style="left:22px;top:-2.5px;width:7.5px;height:5.5px;background:linear-gradient(#fceca0,#e4c050);border-radius:1.5px;border:0.5px solid #c8a040"></div><div class="t" style="left:32px;top:-2.5px;line-height:5.5px"><i class="cj g3" style="width:5.1px;height:5.5px;margin-right:0.6px;color:#111;opacity:0.85"></i><i class="cj g0" style="width:5.1px;height:5.5px;margin-right:0.6px;color:#111;opacity:0.85"></i><i class="cj g1" style="width:5.1px;height:5.5px;margin-right:0.6px;color:#111;opacity:0.85"></i><i class="cj g2" style="width:5.1px;height:5.5px;margin-right:0.6px;color:#111;opacity:0.85"></i><i class="cj g3" style="width:5.1px;height:5.5px;margin-right:0.6px;color:#111;opacity:0.85"></i><i class="cj g0" style="width:5.1px;height:5.5px;margin-right:0.6px;color:#111;opacity:0.85"></i><i class="cj g1" style="width:5.1px;height:5.5px;margin-right:0.6px;color:#111;opacity:0.85"></i></div></div><div class="a" style="left:0;top:203px;width:140px;height:1px;transform:perspective(1000px) translateZ(0.001px) translateY(0.26px);transform-origin:0 0"><div class="a" style="left:26px;top:0px;width:5px;height:1px;background:#dcdcd4"></div><div class="a" style="left:31px;top:2px;width:6px;height:1px;background:#506080"></div><div class="a" style="left:35px;top:-2px;width:1.5px;height:5px;background:#405070"></div><div class="t" style="left:41px;top:-2.5px;line-height:5.5px"><i class="cj g2" style="width:5.1px;height:5.5px;margin-right:0.6px;color:#111;opacity:0.85"></i><i class="cj g3" style="width:5.1px;height:5.5px;margin-right:0.6px;color:#111;opacity:0.85"></i><i class="cj g0" style="width:5.1px;height:5.5px;margin-right:0.6px;color:#111;opacity:0.85"></i><i class="cj g1" style="width:5.1px;height:5.5px;margin-right:0.6px;color:#111;opacity:0.85"></i></div></div><div class="a" style="left:0;top:212px;width:140px;height:1px;transform:perspective(1000px) translateZ(0.001px) translateY(0.9px);transform-origin:0 0"><div class="a" style="left:26px;top:0px;width:5px;height:1px;background:#dcdcd4"></div><div class="a" style="left:31px;top:-3px;width:3px;height:1px;background:#b0b0b0"></div><div class="a" style="left:31px;top:2px;width:3px;height:1.5px;background:#b0b0b0"></div><div class="a" style="left:34.5px;top:-3px;width:0;height:0;border-left:4.5px solid #2a9040;border-top:3px solid transparent;border-bottom:3px solid transparent"></div><div class="t" style="left:41px;top:-2.5px;line-height:5.5px"><i class="cj g2" style="width:5.1px;height:5.5px;margin-right:0.6px;color:#111;opacity:0.85"></i><i class="cj g3" style="width:5.1px;height:5.5px;margin-right:0.6px;color:#111;opacity:0.85"></i><i class="cj g0" style="width:5.1px;height:5.5px;margin-right:0.6px;color:#111;opacity:0.85"></i><i class="cj g1" style="width:5.1px;height:5.5px;margin-right:0.6px;color:#111;opacity:0.85"></i></div></div><div class="a" style="left:0;top:222px;width:140px;height:1px;transform:perspective(1000px) translateZ(0.001px) translateY(0.54px);transform-origin:0 0"><div class="a" style="left:26px;top:0px;width:5px;height:1px;background:#dcdcd4"></div><div class="a" style="left:31px;top:-3px;width:3px;height:1px;background:#b0b0b0"></div><div class="a" style="left:31px;top:2px;width:3px;height:1.5px;background:#b0b0b0"></div><div class="a" style="left:34.5px;top:-3px;width:0;height:0;border-left:4.5px solid #3a70c0;border-top:3px solid transparent;border-bottom:3px solid transparent"></div><div class="t" style="left:41px;top:-2.5px;line-height:5.5px"><i class="cj g2" style="width:5.1px;height:5.5px;margin-right:0.6px;color:#111;opacity:0.85"></i><i class="cj g3" style="width:5.1px;height:5.5px;margin-right:0.6px;color:#111;opacity:0.85"></i><i class="cj g0" style="width:5.1px;height:5.5px;margin-right:0.6px;color:#111;opacity:0.85"></i><i class="cj g1" style="width:5.1px;height:5.5px;margin-right:0.6px;color:#111;opacity:0.85"></i></div></div><div class="a" style="left:0;top:232px;width:140px;height:1px;transform:perspective(1000px) translateZ(0.001px) translateY(0.18px);transform-origin:0 0"><div class="a" style="left:26px;top:0px;width:5px;height:1px;background:#dcdcd4"></div><div class="a" style="left:31px;top:-3px;width:3px;height:1px;background:#4060b0"></div><div class="a" style="left:31px;top:2px;width:3px;height:1.5px;background:#30a040"></div><div class="a" style="left:34.5px;top:-3px;width:0;height:0;border-left:4.5px solid #b02030;border-top:3px solid transparent;border-bottom:3px solid transparent"></div><div class="t" style="left:41px;top:-2.5px;line-height:5.5px"><i class="cj g2" style="width:5.1px;height:5.5px;margin-right:0.6px;color:#111;opacity:0.85"></i><i class="cj g3" style="width:5.1px;height:5.5px;margin-right:0.6px;color:#111;opacity:0.85"></i><i class="cj g0" style="width:5.1px;height:5.5px;margin-right:0.6px;color:#111;opacity:0.85"></i><i class="cj g1" style="width:5.1px;height:5.5px;margin-right:0.6px;color:#111;opacity:0.85"></i></div></div><div class="a" style="left:0;top:241px;width:140px;height:1px;transform:perspective(1000px) translateZ(0.001px) translateY(0.82px);transform-origin:0 0"><div class="a" style="left:16px;top:0px;width:6px;height:1px;background:#dcdcd4"></div><div class="a" style="left:22px;top:-2.5px;width:7.5px;height:5.5px;background:linear-gradient(#fceca0,#e4c050);border-radius:1.5px;border:0.5px solid #c8a040"></div><div class="t" style="left:32px;top:-2.5px;line-height:5.5px"><i class="cj g2" style="width:5.1px;height:5.5px;margin-right:0.6px;color:#111;opacity:0.85"></i><i class="cj g3" style="width:5.1px;height:5.5px;margin-right:0.6px;color:#111;opacity:0.85"></i></div></div><div class="a" style="left:0;top:251px;width:140px;height:1px;transform:perspective(1000px) translateZ(0.001px) translateY(0.46px);transform-origin:0 0"><div class="a" style="left:16px;top:0px;width:6px;height:1px;background:#dcdcd4"></div><div class="a" style="left:22px;top:-2.5px;width:7.5px;height:5.5px;background:linear-gradient(#fceca0,#e4c050);border-radius:1.5px;border:0.5px solid #c8a040"></div><div class="t" style="left:32px;top:-2.5px;line-height:5.5px"><i class="cj g0" style="width:5.1px;height:5.5px;margin-right:0.6px;color:#111;opacity:0.85"></i><i class="cj g1" style="width:5.1px;height:5.5px;margin-right:0.6px;color:#111;opacity:0.85"></i></div></div><div class="a" style="left:0;top:261px;width:140px;height:1px;transform:perspective(1000px) translateZ(0.001px) translateY(0.1px);transform-origin:0 0"><div class="a" style="left:16px;top:0px;width:6px;height:1px;background:#dcdcd4"></div><div class="a" style="left:22px;top:-2.5px;width:7.5px;height:5.5px;background:linear-gradient(#fceca0,#e4c050);border-radius:1.5px;border:0.5px solid #c8a040"></div><div class="t" style="left:32px;top:-2.5px;line-height:5.5px"><i class="cj g2" style="width:5.1px;height:5.5px;margin-right:0.6px;color:#111;opacity:0.85"></i><i class="cj g3" style="width:5.1px;height:5.5px;margin-right:0.6px;color:#111;opacity:0.85"></i><i class="cj g0" style="width:5.1px;height:5.5px;margin-right:0.6px;color:#111;opacity:0.85"></i><i class="cj g1" style="width:5.1px;height:5.5px;margin-right:0.6px;color:#111;opacity:0.85"></i></div></div><div class="a" style="left:0;top:270px;width:140px;height:1px;transform:perspective(1000px) translateZ(0.001px) translateY(0.74px);transform-origin:0 0"><div class="a" style="left:16px;top:0px;width:6px;height:1px;background:#dcdcd4"></div><div class="a" style="left:13.5px;top:-2.5px;width:5px;height:5px;border:1px solid #c8ccd0;background:#f0f2f4"></div><div class="a" style="left:14.5px;top:-0.5px;width:3px;height:1px;background:#9aa0a8"></div><div class="a" style="left:15.5px;top:-1.5px;width:1px;height:3px;background:#9aa0a8"></div><div class="a" style="left:22px;top:-2.5px;width:7.5px;height:5.5px;background:linear-gradient(#fceca0,#e4c050);border-radius:1.5px;border:0.5px solid #c8a040"></div><div class="t" style="left:32px;top:-2.5px;line-height:5.5px"><i class="cj g2" style="width:5.1px;height:5.5px;margin-right:0.6px;color:#111;opacity:0.85"></i><i class="cj g3" style="width:5.1px;height:5.5px;margin-right:0.6px;color:#111;opacity:0.85"></i><i class="cj g0" style="width:5.1px;height:5.5px;margin-right:0.6px;color:#111;opacity:0.85"></i><i class="cj g1" style="width:5.1px;height:5.5px;margin-right:0.6px;color:#111;opacity:0.85"></i></div></div><div class="a" style="left:0;top:280px;width:140px;height:1px;transform:perspective(1000px) translateZ(0.001px) translateY(0.38px);transform-origin:0 0"><div class="a" style="left:16px;top:0px;width:6px;height:1px;background:#dcdcd4"></div><div class="a" style="left:13.5px;top:-2.5px;width:5px;height:5px;border:1px solid #c8ccd0;background:#f0f2f4"></div><div class="a" style="left:14.5px;top:-0.5px;width:3px;height:1px;background:#9aa0a8"></div><div class="a" style="left:22px;top:-2.5px;width:7.5px;height:5.5px;background:linear-gradient(#fceca0,#e4c050);border-radius:1.5px;border:0.5px solid #c8a040"></div><div class="t" style="left:32px;top:-2.5px;line-height:5.5px"><i class="cj g2" style="width:5.1px;height:5.5px;margin-right:0.6px;color:#111;opacity:0.85"></i><i class="cj g3" style="width:5.1px;height:5.5px;margin-right:0.6px;color:#111;opacity:0.85"></i><i class="cj g0" style="width:5.1px;height:5.5px;margin-right:0.6px;color:#111;opacity:0.85"></i><i class="cj g1" style="width:5.1px;height:5.5px;margin-right:0.6px;color:#111;opacity:0.85"></i></div></div><div class="a" style="left:0;top:290px;width:140px;height:1px;transform:perspective(1000px) translateZ(0.001px) translateY(0.02px);transform-origin:0 0"><div class="a" style="left:26px;top:0px;width:5px;height:1px;background:#dcdcd4"></div><div class="a" style="left:31px;top:-3.5px;width:7.5px;height:7.5px;background:#eeeef8;border:1px solid #6a6ab0"></div><div class="a" style="left:32.5px;top:-2px;width:1.3px;height:4.5px;background:#3a3a80"></div><div class="a" style="left:34px;top:-2px;width:3px;height:4.5px;border-top:1px solid #5050a0;border-bottom:1px solid #5050a0;background:linear-gradient(135deg,transparent 40%,#6060b0 40%,#6060b0 60%,transparent 60%)"></div><div class="t" style="left:41px;top:-2px;font-size:6.3px;line-height:5.5px;color:#111;-webkit-text-stroke:0.15px #111;transform:scaleX(.9);transform-origin:0 0"><span style="vertical-align:top;white-space:pre">STEEL - </span><i class="cj g2" style="width:5.6px;height:5.5px;margin-right:0.75px;color:#111;opacity:0.8"></i><i class="cj g3" style="width:5.6px;height:5.5px;margin-right:0.75px;color:#111;opacity:0.8"></i><i class="cj g0" style="width:5.6px;height:5.5px;margin-right:0.75px;color:#111;opacity:0.8"></i><i class="cj g1" style="width:5.6px;height:5.5px;margin-right:0.75px;color:#111;opacity:0.8"></i><i class="cj g2" style="width:5.6px;height:5.5px;margin-right:0.75px;color:#111;opacity:0.8"></i><i class="cj g3" style="width:5.6px;height:5.5px;margin-right:0.75px;color:#111;opacity:0.8"></i><i class="cj g0" style="width:5.6px;height:5.5px;margin-right:0.75px;color:#111;opacity:0.8"></i><i class="cj g1" style="width:5.6px;height:5.5px;margin-right:0.75px;color:#111;opacity:0.8"></i><i class="cj g2" style="width:5.6px;height:5.5px;margin-right:0.75px;color:#111;opacity:0.8"></i></div></div><div class="a" style="left:0;top:299px;width:140px;height:1px;transform:perspective(1000px) translateZ(0.001px) translateY(0.66px);transform-origin:0 0"><div class="a" style="left:26px;top:0px;width:5px;height:1px;background:#dcdcd4"></div><div class="a" style="left:31px;top:-3.5px;width:7.5px;height:7.5px;background:#eeeef8;border:1px solid #6a6ab0"></div><div class="a" style="left:32.5px;top:-2px;width:1.3px;height:4.5px;background:#3a3a80"></div><div class="a" style="left:34px;top:-2px;width:3px;height:4.5px;border-top:1px solid #5050a0;border-bottom:1px solid #5050a0;background:linear-gradient(135deg,transparent 40%,#6060b0 40%,#6060b0 60%,transparent 60%)"></div><div class="t" style="left:41px;top:-2px;font-size:6.3px;line-height:5.5px;color:#111;-webkit-text-stroke:0.15px #111;transform:scaleX(.9);transform-origin:0 0"><span style="vertical-align:top;white-space:pre">STEEL EC3 - </span><i class="cj g3" style="width:5.6px;height:5.5px;margin-right:0.75px;color:#111;opacity:0.8"></i><i class="cj g0" style="width:5.6px;height:5.5px;margin-right:0.75px;color:#111;opacity:0.8"></i><i class="cj g1" style="width:5.6px;height:5.5px;margin-right:0.75px;color:#111;opacity:0.8"></i><i class="cj g2" style="width:5.6px;height:5.5px;margin-right:0.75px;color:#111;opacity:0.8"></i><i class="cj g3" style="width:5.6px;height:5.5px;margin-right:0.75px;color:#111;opacity:0.8"></i><i class="cj g0" style="width:5.6px;height:5.5px;margin-right:0.75px;color:#111;opacity:0.8"></i><span style="vertical-align:top;white-space:pre"> 3 </span><i class="cj g1" style="width:5.6px;height:5.5px;margin-right:0.75px;color:#111;opacity:0.8"></i><i class="cj g2" style="width:5.6px;height:5.5px;margin-right:0.75px;color:#111;opacity:0.8"></i></div></div><div class="a" style="left:0;top:309px;width:140px;height:1px;transform:perspective(1000px) translateZ(0.001px) translateY(0.3px);transform-origin:0 0"><div class="a" style="left:26px;top:0px;width:5px;height:1px;background:#dcdcd4"></div><div class="a" style="left:31px;top:-3.5px;width:7.5px;height:7.5px;background:#eeeef8;border:1px solid #6a6ab0"></div><div class="a" style="left:32.5px;top:-2px;width:1.3px;height:4.5px;background:#3a3a80"></div><div class="a" style="left:34px;top:-2px;width:3px;height:4.5px;border-top:1px solid #5050a0;border-bottom:1px solid #5050a0;background:linear-gradient(135deg,transparent 40%,#6060b0 40%,#6060b0 60%,transparent 60%)"></div><div class="t" style="left:41px;top:-2px;font-size:6.3px;line-height:5.5px;color:#111;-webkit-text-stroke:0.15px #111;transform:scaleX(.9);transform-origin:0 0"><span style="vertical-align:top;white-space:pre">STEEL AISC - </span><i class="cj g3" style="width:5.6px;height:5.5px;margin-right:0.75px;color:#111;opacity:0.8"></i><i class="cj g0" style="width:5.6px;height:5.5px;margin-right:0.75px;color:#111;opacity:0.8"></i><span style="vertical-align:top;white-space:pre"> AISC (LRFD </span><i class="cj g1" style="width:5.6px;height:5.5px;margin-right:0.75px;color:#111;opacity:0.8"></i></div></div><div class="a" style="left:0;top:318px;width:140px;height:1px;transform:perspective(1000px) translateZ(0.001px) translateY(0.94px);transform-origin:0 0"><div class="a" style="left:26px;top:0px;width:5px;height:1px;background:#dcdcd4"></div><div class="a" style="left:31px;top:-3.5px;width:7.5px;height:7.5px;background:#eeeef8;border:1px solid #6a6ab0"></div><div class="a" style="left:32.5px;top:-2px;width:1.3px;height:4.5px;background:#3a3a80"></div><div class="a" style="left:34px;top:-2px;width:3px;height:4.5px;border-top:1px solid #5050a0;border-bottom:1px solid #5050a0;background:linear-gradient(135deg,transparent 40%,#6060b0 40%,#6060b0 60%,transparent 60%)"></div><div class="t" style="left:41px;top:-2px;font-size:6.3px;line-height:5.5px;color:#111;-webkit-text-stroke:0.15px #111;transform:scaleX(.9);transform-origin:0 0"><span style="vertical-align:top;white-space:pre">STEEL IS - </span><i class="cj g2" style="width:5.6px;height:5.5px;margin-right:0.75px;color:#111;opacity:0.8"></i><i class="cj g3" style="width:5.6px;height:5.5px;margin-right:0.75px;color:#111;opacity:0.8"></i><span style="vertical-align:top;white-space:pre"> IS </span><i class="cj g0" style="width:5.6px;height:5.5px;margin-right:0.75px;color:#111;opacity:0.8"></i><i class="cj g1" style="width:5.6px;height:5.5px;margin-right:0.75px;color:#111;opacity:0.8"></i><i class="cj g2" style="width:5.6px;height:5.5px;margin-right:0.75px;color:#111;opacity:0.8"></i><i class="cj g3" style="width:5.6px;height:5.5px;margin-right:0.75px;color:#111;opacity:0.8"></i><i class="cj g0" style="width:5.6px;height:5.5px;margin-right:0.75px;color:#111;opacity:0.8"></i><i class="cj g1" style="width:5.6px;height:5.5px;margin-right:0.75px;color:#111;opacity:0.8"></i></div></div><div class="a" style="left:0;top:328px;width:140px;height:1px;transform:perspective(1000px) translateZ(0.001px) translateY(0.58px);transform-origin:0 0"><div class="a" style="left:26px;top:0px;width:5px;height:1px;background:#dcdcd4"></div><div class="a" style="left:31px;top:-3.5px;width:7.5px;height:7.5px;background:#eeeef8;border:1px solid #6a6ab0"></div><div class="a" style="left:32.5px;top:-2px;width:1.3px;height:4.5px;background:#3a3a80"></div><div class="a" style="left:34px;top:-2px;width:3px;height:4.5px;border-top:1px solid #5050a0;border-bottom:1px solid #5050a0;background:linear-gradient(135deg,transparent 40%,#6060b0 40%,#6060b0 60%,transparent 60%)"></div><div class="t" style="left:41px;top:-2px;font-size:6.3px;line-height:5.5px;color:#111;-webkit-text-stroke:0.15px #111;transform:scaleX(.9);transform-origin:0 0"><span style="vertical-align:top;white-space:pre">STEEL SIA - </span><i class="cj g2" style="width:5.6px;height:5.5px;margin-right:0.75px;color:#111;opacity:0.8"></i><i class="cj g3" style="width:5.6px;height:5.5px;margin-right:0.75px;color:#111;opacity:0.8"></i><span style="vertical-align:top;white-space:pre"> SIA </span><i class="cj g0" style="width:5.6px;height:5.5px;margin-right:0.75px;color:#111;opacity:0.8"></i><i class="cj g1" style="width:5.6px;height:5.5px;margin-right:0.75px;color:#111;opacity:0.8"></i><i class="cj g2" style="width:5.6px;height:5.5px;margin-right:0.75px;color:#111;opacity:0.8"></i><i class="cj g3" style="width:5.6px;height:5.5px;margin-right:0.75px;color:#111;opacity:0.8"></i><i class="cj g0" style="width:5.6px;height:5.5px;margin-right:0.75px;color:#111;opacity:0.8"></i><i class="cj g1" style="width:5.6px;height:5.5px;margin-right:0.75px;color:#111;opacity:0.8"></i></div></div><div class="a" style="left:0;top:338px;width:140px;height:1px;transform:perspective(1000px) translateZ(0.001px) translateY(0.22px);transform-origin:0 0"><div class="a" style="left:26px;top:0px;width:5px;height:1px;background:#dcdcd4"></div><div class="a" style="left:31px;top:-3.5px;width:7.5px;height:7.5px;background:#eeeef8;border:1px solid #6a6ab0"></div><div class="a" style="left:32.5px;top:-2px;width:1.3px;height:4.5px;background:#3a3a80"></div><div class="a" style="left:34px;top:-2px;width:3px;height:4.5px;border-top:1px solid #5050a0;border-bottom:1px solid #5050a0;background:linear-gradient(135deg,transparent 40%,#6060b0 40%,#6060b0 60%,transparent 60%)"></div><div class="t" style="left:41px;top:-2px;font-size:6.3px;line-height:5.5px;color:#111;-webkit-text-stroke:0.15px #111;transform:scaleX(.9);transform-origin:0 0"><span style="vertical-align:top;white-space:pre">STEEL BS - </span><i class="cj g2" style="width:5.6px;height:5.5px;margin-right:0.75px;color:#111;opacity:0.8"></i><i class="cj g3" style="width:5.6px;height:5.5px;margin-right:0.75px;color:#111;opacity:0.8"></i><span style="vertical-align:top;white-space:pre"> BS </span><i class="cj g0" style="width:5.6px;height:5.5px;margin-right:0.75px;color:#111;opacity:0.8"></i><i class="cj g1" style="width:5.6px;height:5.5px;margin-right:0.75px;color:#111;opacity:0.8"></i><i class="cj g2" style="width:5.6px;height:5.5px;margin-right:0.75px;color:#111;opacity:0.8"></i><i class="cj g3" style="width:5.6px;height:5.5px;margin-right:0.75px;color:#111;opacity:0.8"></i><i class="cj g0" style="width:5.6px;height:5.5px;margin-right:0.75px;color:#111;opacity:0.8"></i><i class="cj g1" style="width:5.6px;height:5.5px;margin-right:0.75px;color:#111;opacity:0.8"></i></div></div><div class="a" style="left:0;top:347px;width:140px;height:1px;transform:perspective(1000px) translateZ(0.001px) translateY(0.86px);transform-origin:0 0"><div class="a" style="left:26px;top:0px;width:5px;height:1px;background:#dcdcd4"></div><div class="a" style="left:31px;top:-3.5px;width:7.5px;height:7.5px;background:#eeeef8;border:1px solid #6a6ab0"></div><div class="a" style="left:32.5px;top:-2px;width:1.3px;height:4.5px;background:#3a3a80"></div><div class="a" style="left:34px;top:-2px;width:3px;height:4.5px;border-top:1px solid #5050a0;border-bottom:1px solid #5050a0;background:linear-gradient(135deg,transparent 40%,#6060b0 40%,#6060b0 60%,transparent 60%)"></div><div class="t" style="left:41px;top:-2px;font-size:6.3px;line-height:5.5px;color:#111;-webkit-text-stroke:0.15px #111;transform:scaleX(.9);transform-origin:0 0"><span style="vertical-align:top;white-space:pre">STEEL GB - </span><i class="cj g2" style="width:5.6px;height:5.5px;margin-right:0.75px;color:#111;opacity:0.8"></i><i class="cj g3" style="width:5.6px;height:5.5px;margin-right:0.75px;color:#111;opacity:0.8"></i><span style="vertical-align:top;white-space:pre"> GB </span><i class="cj g0" style="width:5.6px;height:5.5px;margin-right:0.75px;color:#111;opacity:0.8"></i><i class="cj g1" style="width:5.6px;height:5.5px;margin-right:0.75px;color:#111;opacity:0.8"></i><i class="cj g2" style="width:5.6px;height:5.5px;margin-right:0.75px;color:#111;opacity:0.8"></i><i class="cj g3" style="width:5.6px;height:5.5px;margin-right:0.75px;color:#111;opacity:0.8"></i><i class="cj g0" style="width:5.6px;height:5.5px;margin-right:0.75px;color:#111;opacity:0.8"></i><i class="cj g1" style="width:5.6px;height:5.5px;margin-right:0.75px;color:#111;opacity:0.8"></i></div></div><div class="a" style="left:0;top:357px;width:140px;height:1px;transform:perspective(1000px) translateZ(0.001px) translateY(0.5px);transform-origin:0 0"><div class="a" style="left:26px;top:0px;width:5px;height:1px;background:#dcdcd4"></div><div class="a" style="left:31px;top:-3.5px;width:7.5px;height:7.5px;background:#eeeef8;border:1px solid #6a6ab0"></div><div class="a" style="left:32.5px;top:-2px;width:1.3px;height:4.5px;background:#3a3a80"></div><div class="a" style="left:34px;top:-2px;width:3px;height:4.5px;border-top:1px solid #5050a0;border-bottom:1px solid #5050a0;background:linear-gradient(135deg,transparent 40%,#6060b0 40%,#6060b0 60%,transparent 60%)"></div><div class="t" style="left:41px;top:-2px;font-size:6.3px;line-height:5.5px;color:#111;-webkit-text-stroke:0.15px #111;transform:scaleX(.9);transform-origin:0 0"><span style="vertical-align:top;white-space:pre">STEEL CSA - </span><i class="cj g2" style="width:5.6px;height:5.5px;margin-right:0.75px;color:#111;opacity:0.8"></i><i class="cj g3" style="width:5.6px;height:5.5px;margin-right:0.75px;color:#111;opacity:0.8"></i><span style="vertical-align:top;white-space:pre"> CSA </span><i class="cj g0" style="width:5.6px;height:5.5px;margin-right:0.75px;color:#111;opacity:0.8"></i><i class="cj g1" style="width:5.6px;height:5.5px;margin-right:0.75px;color:#111;opacity:0.8"></i><i class="cj g2" style="width:5.6px;height:5.5px;margin-right:0.75px;color:#111;opacity:0.8"></i><i class="cj g3" style="width:5.6px;height:5.5px;margin-right:0.75px;color:#111;opacity:0.8"></i><i class="cj g0" style="width:5.6px;height:5.5px;margin-right:0.75px;color:#111;opacity:0.8"></i></div></div><div class="a" style="left:0;top:367px;width:140px;height:1px;transform:perspective(1000px) translateZ(0.001px) translateY(0.14px);transform-origin:0 0"><div class="a" style="left:26px;top:0px;width:5px;height:1px;background:#dcdcd4"></div><div class="a" style="left:31px;top:-3.5px;width:7.5px;height:7.5px;background:#eeeef8;border:1px solid #6a6ab0"></div><div class="a" style="left:32.5px;top:-2px;width:1.3px;height:4.5px;background:#3a3a80"></div><div class="a" style="left:34px;top:-2px;width:3px;height:4.5px;border-top:1px solid #5050a0;border-bottom:1px solid #5050a0;background:linear-gradient(135deg,transparent 40%,#6060b0 40%,#6060b0 60%,transparent 60%)"></div><div class="t" style="left:41px;top:-2px;font-size:6.3px;line-height:5.5px;color:#111;-webkit-text-stroke:0.15px #111;transform:scaleX(.9);transform-origin:0 0"><span style="vertical-align:top;white-space:pre">STEEL AS - </span><i class="cj g1" style="width:5.6px;height:5.5px;margin-right:0.75px;color:#111;opacity:0.8"></i><i class="cj g2" style="width:5.6px;height:5.5px;margin-right:0.75px;color:#111;opacity:0.8"></i><span style="vertical-align:top;white-space:pre"> AS </span><i class="cj g3" style="width:5.6px;height:5.5px;margin-right:0.75px;color:#111;opacity:0.8"></i><i class="cj g0" style="width:5.6px;height:5.5px;margin-right:0.75px;color:#111;opacity:0.8"></i><i class="cj g1" style="width:5.6px;height:5.5px;margin-right:0.75px;color:#111;opacity:0.8"></i><i class="cj g2" style="width:5.6px;height:5.5px;margin-right:0.75px;color:#111;opacity:0.8"></i><i class="cj g3" style="width:5.6px;height:5.5px;margin-right:0.75px;color:#111;opacity:0.8"></i><i class="cj g0" style="width:5.6px;height:5.5px;margin-right:0.75px;color:#111;opacity:0.8"></i></div></div><div class="a" style="left:0;top:376px;width:140px;height:1px;transform:perspective(1000px) translateZ(0.001px) translateY(0.78px);transform-origin:0 0"><div class="a" style="left:26px;top:0px;width:5px;height:1px;background:#dcdcd4"></div><div class="a" style="left:31px;top:-3.5px;width:7.5px;height:7.5px;background:#eeeef8;border:1px solid #6a6ab0"></div><div class="a" style="left:32.5px;top:-2px;width:1.3px;height:4.5px;background:#3a3a80"></div><div class="a" style="left:34px;top:-2px;width:3px;height:4.5px;border-top:1px solid #5050a0;border-bottom:1px solid #5050a0;background:linear-gradient(135deg,transparent 40%,#6060b0 40%,#6060b0 60%,transparent 60%)"></div><div class="t" style="left:41px;top:-2px;font-size:6.3px;line-height:5.5px;color:#111;-webkit-text-stroke:0.15px #111;transform:scaleX(.9);transform-origin:0 0"><span style="vertical-align:top;white-space:pre">STEEL NTC-DF - </span><i class="cj g1" style="width:5.6px;height:5.5px;margin-right:0.75px;color:#111;opacity:0.8"></i><i class="cj g2" style="width:5.6px;height:5.5px;margin-right:0.75px;color:#111;opacity:0.8"></i><span style="vertical-align:top;white-space:pre"> NTC-DF </span><i class="cj g3" style="width:5.6px;height:5.5px;margin-right:0.75px;color:#111;opacity:0.8"></i></div></div><div class="a" style="left:0;top:386px;width:140px;height:1px;transform:perspective(1000px) translateZ(0.001px) translateY(0.42px);transform-origin:0 0"><div class="a" style="left:26px;top:0px;width:5px;height:1px;background:#dcdcd4"></div><div class="a" style="left:31px;top:-3.5px;width:7.5px;height:7.5px;background:#eeeef8;border:1px solid #6a6ab0"></div><div class="a" style="left:32.5px;top:-2px;width:1.3px;height:4.5px;background:#3a3a80"></div><div class="a" style="left:34px;top:-2px;width:3px;height:4.5px;border-top:1px solid #5050a0;border-bottom:1px solid #5050a0;background:linear-gradient(135deg,transparent 40%,#6060b0 40%,#6060b0 60%,transparent 60%)"></div><div class="t" style="left:41px;top:-2px;font-size:6.3px;line-height:5.5px;color:#111;-webkit-text-stroke:0.15px #111;transform:scaleX(.9);transform-origin:0 0"><span style="vertical-align:top;white-space:pre">STEEL SP - </span><i class="cj g0" style="width:5.6px;height:5.5px;margin-right:0.75px;color:#111;opacity:0.8"></i><i class="cj g1" style="width:5.6px;height:5.5px;margin-right:0.75px;color:#111;opacity:0.8"></i><span style="vertical-align:top;white-space:pre"> SP </span><i class="cj g2" style="width:5.6px;height:5.5px;margin-right:0.75px;color:#111;opacity:0.8"></i><i class="cj g3" style="width:5.6px;height:5.5px;margin-right:0.75px;color:#111;opacity:0.8"></i><i class="cj g0" style="width:5.6px;height:5.5px;margin-right:0.75px;color:#111;opacity:0.8"></i><i class="cj g1" style="width:5.6px;height:5.5px;margin-right:0.75px;color:#111;opacity:0.8"></i><i class="cj g2" style="width:5.6px;height:5.5px;margin-right:0.75px;color:#111;opacity:0.8"></i><i class="cj g3" style="width:5.6px;height:5.5px;margin-right:0.75px;color:#111;opacity:0.8"></i></div></div><div class="a" style="left:0;top:396px;width:140px;height:1px;transform:perspective(1000px) translateZ(0.001px) translateY(0.06px);transform-origin:0 0"><div class="a" style="left:26px;top:0px;width:5px;height:1px;background:#dcdcd4"></div><div class="a" style="left:31px;top:-3.5px;width:7.5px;height:7.5px;background:#eeeef8;border:1px solid #6a6ab0"></div><div class="a" style="left:32.5px;top:-2px;width:1.3px;height:4.5px;background:#3a3a80"></div><div class="a" style="left:34px;top:-2px;width:3px;height:4.5px;border-top:1px solid #5050a0;border-bottom:1px solid #5050a0;background:linear-gradient(135deg,transparent 40%,#6060b0 40%,#6060b0 60%,transparent 60%)"></div><div class="t" style="left:41px;top:-2px;font-size:6.3px;line-height:5.5px;color:#111;-webkit-text-stroke:0.15px #111;transform:scaleX(.9);transform-origin:0 0"><span style="vertical-align:top;white-space:pre">STEEL Plastic - </span><i class="cj g0" style="width:5.6px;height:5.5px;margin-right:0.75px;color:#111;opacity:0.8"></i><i class="cj g1" style="width:5.6px;height:5.5px;margin-right:0.75px;color:#111;opacity:0.8"></i><i class="cj g2" style="width:5.6px;height:5.5px;margin-right:0.75px;color:#111;opacity:0.8"></i><i class="cj g3" style="width:5.6px;height:5.5px;margin-right:0.75px;color:#111;opacity:0.8"></i><i class="cj g0" style="width:5.6px;height:5.5px;margin-right:0.75px;color:#111;opacity:0.8"></i><i class="cj g1" style="width:5.6px;height:5.5px;margin-right:0.75px;color:#111;opacity:0.8"></i><i class="cj g2" style="width:5.6px;height:5.5px;margin-right:0.75px;color:#111;opacity:0.8"></i><i class="cj g3" style="width:5.6px;height:5.5px;margin-right:0.75px;color:#111;opacity:0.8"></i></div></div><div class="a" style="left:0;top:405px;width:140px;height:1px;transform:perspective(1000px) translateZ(0.001px) translateY(0.7px);transform-origin:0 0"><div class="a" style="left:26px;top:0px;width:5px;height:1px;background:#dcdcd4"></div><div class="a" style="left:31px;top:-3.5px;width:7.5px;height:7.5px;background:#eeeef8;border:1px solid #6a6ab0"></div><div class="a" style="left:32.5px;top:-2px;width:1.3px;height:4.5px;background:#3a3a80"></div><div class="a" style="left:34px;top:-2px;width:3px;height:4.5px;border-top:1px solid #5050a0;border-bottom:1px solid #5050a0;background:linear-gradient(135deg,transparent 40%,#6060b0 40%,#6060b0 60%,transparent 60%)"></div><div class="t" style="left:41px;top:-2px;font-size:6.3px;line-height:5.5px;color:#111;-webkit-text-stroke:0.15px #111;transform:scaleX(.9);transform-origin:0 0"><span style="vertical-align:top;white-space:pre">STEEL SANS - </span><i class="cj g0" style="width:5.6px;height:5.5px;margin-right:0.75px;color:#111;opacity:0.8"></i><i class="cj g1" style="width:5.6px;height:5.5px;margin-right:0.75px;color:#111;opacity:0.8"></i><span style="vertical-align:top;white-space:pre"> SANS </span><i class="cj g2" style="width:5.6px;height:5.5px;margin-right:0.75px;color:#111;opacity:0.8"></i><i class="cj g3" style="width:5.6px;height:5.5px;margin-right:0.75px;color:#111;opacity:0.8"></i><i class="cj g0" style="width:5.6px;height:5.5px;margin-right:0.75px;color:#111;opacity:0.8"></i></div></div><div class="a" style="left:0;top:415px;width:140px;height:1px;transform:perspective(1000px) translateZ(0.001px) translateY(0.34px);transform-origin:0 0"><div class="a" style="left:26px;top:0px;width:5px;height:1px;background:#dcdcd4"></div><div class="a" style="left:31px;top:-3.5px;width:7.5px;height:7.5px;background:#eeeef8;border:1px solid #6a6ab0"></div><div class="a" style="left:32.5px;top:-2px;width:1.3px;height:4.5px;background:#3a3a80"></div><div class="a" style="left:34px;top:-2px;width:3px;height:4.5px;border-top:1px solid #5050a0;border-bottom:1px solid #5050a0;background:linear-gradient(135deg,transparent 40%,#6060b0 40%,#6060b0 60%,transparent 60%)"></div><div class="t" style="left:41px;top:-2px;font-size:6.3px;line-height:5.5px;color:#111;-webkit-text-stroke:0.15px #111;transform:scaleX(.9);transform-origin:0 0"><span style="vertical-align:top;white-space:pre">STEEL Fatigue Members - </span><i class="cj g1" style="width:5.6px;height:5.5px;margin-right:0.75px;color:#111;opacity:0.8"></i><i class="cj g2" style="width:5.6px;height:5.5px;margin-right:0.75px;color:#111;opacity:0.8"></i></div></div><div class="a" style="left:0;top:424px;width:140px;height:1px;transform:perspective(1000px) translateZ(0.001px) translateY(0.98px);transform-origin:0 0"><div class="a" style="left:26px;top:0px;width:5px;height:1px;background:#dcdcd4"></div><div class="a" style="left:31px;top:-3.5px;width:7.5px;height:7.5px;background:#eeeef8;border:1px solid #6a6ab0"></div><div class="a" style="left:32.5px;top:-2px;width:1.3px;height:4.5px;background:#3a3a80"></div><div class="a" style="left:34px;top:-2px;width:3px;height:4.5px;border-top:1px solid #5050a0;border-bottom:1px solid #5050a0;background:linear-gradient(135deg,transparent 40%,#6060b0 40%,#6060b0 60%,transparent 60%)"></div><div class="t" style="left:41px;top:-2px;font-size:6.3px;line-height:5.5px;color:#111;-webkit-text-stroke:0.15px #111;transform:scaleX(.9);transform-origin:0 0"><span style="vertical-align:top;white-space:pre">STEEL NBR - </span><i class="cj g3" style="width:5.6px;height:5.5px;margin-right:0.75px;color:#111;opacity:0.8"></i><i class="cj g0" style="width:5.6px;height:5.5px;margin-right:0.75px;color:#111;opacity:0.8"></i><span style="vertical-align:top;white-space:pre"> NBR </span><i class="cj g1" style="width:5.6px;height:5.5px;margin-right:0.75px;color:#111;opacity:0.8"></i><i class="cj g2" style="width:5.6px;height:5.5px;margin-right:0.75px;color:#111;opacity:0.8"></i><i class="cj g3" style="width:5.6px;height:5.5px;margin-right:0.75px;color:#111;opacity:0.8"></i><i class="cj g0" style="width:5.6px;height:5.5px;margin-right:0.75px;color:#111;opacity:0.8"></i></div></div></div>
<div class="a" style="left:128px;top:63px;width:7px;height:360px;background:#ececea"></div>
<div class="a" style="left:135px;top:63px;width:1.5px;height:360px;background:#eef1f5"></div>
<svg class="a" style="left:0;top:0" width="600" height="457"><path d="M129.5 69 L131.5 67 L133.5 69" stroke="#555" stroke-width="1.1" fill="none"/></svg>
<div class="a" style="left:128px;top:76px;width:6px;height:170px;background:#cacac6"></div>
<svg class="a" style="left:0;top:0" width="600" height="457"><path d="M129.5 418 L131.5 420 L133.5 418" stroke="#555" stroke-width="1.1" fill="none"/></svg>
<div class="a" style="left:2px;top:423px;width:126px;height:8px;background:#f0f0ec"></div>
<div class="a" style="left:9px;top:424px;width:71px;height:6px;background:#cdcdc8"></div>
<div class="t" style="left:4px;top:424px;font-size:8px;line-height:6px;color:#555">&#8249;</div>
<div class="t" style="left:122px;top:424px;font-size:8px;line-height:6px;color:#555">&#8250;</div>
<div class="a" style="left:1px;top:431px;width:139px;height:13px;background:#d8dde4"></div>
<div class="a" style="left:1.5px;top:431px;width:24px;height:12px;background:#e9ecf0"></div>
<svg class="a" style="left:0;top:426px" width="80" height="20" viewBox="0 426 80 20"><rect x="3" y="433.5" width="6" height="7" fill="#f4f4f8" stroke="#5a78b0" stroke-width="0.9"/><circle cx="5.5" cy="438" r="2.2" fill="#e8d040"/><path d="M7 440 l2.5 2" stroke="#405080" stroke-width="1.2"/><rect x="31" y="433.5" width="6.5" height="7" fill="#3a70c0"/><rect x="31" y="433.5" width="6.5" height="2" fill="#202840"/><rect x="31.5" y="436" width="5.5" height="1.5" fill="#e0ecff"/><path d="M56 441 L60.5 433.5 L61.5 441 z" fill="#4a68c0"/><path d="M55.5 441 h6" stroke="#2a3a80" stroke-width="1"/></svg>
<div class="t" style="left:12px;top:434.3px;"><i class="cj g1" style="width:5.8px;height:5.8px;margin-right:0.5px;color:#222;opacity:0.72"></i><i class="cj g2" style="width:5.8px;height:5.8px;margin-right:0.5px;color:#222;opacity:0.72"></i></div>
<div class="t" style="left:38.7px;top:434.3px;"><i class="cj g3" style="width:5.8px;height:5.8px;margin-right:0.5px;color:#333;opacity:0.55"></i><i class="cj g0" style="width:5.8px;height:5.8px;margin-right:0.5px;color:#333;opacity:0.55"></i></div>
<div class="t" style="left:64px;top:434.3px;"><i class="cj g1" style="width:5.8px;height:5.8px;margin-right:0.5px;color:#333;opacity:0.6"></i><i class="cj g2" style="width:5.8px;height:5.8px;margin-right:0.5px;color:#333;opacity:0.6"></i></div>
<svg width="458" height="278" style="position:absolute;left:140px;top:52px"><defs><pattern id="dp" x="0" y="0" width="11.8" height="13.1" patternUnits="userSpaceOnUse" patternTransform="skewY(8.37)"><circle cx="5.5" cy="5.6" r="0.8" fill="#3c3c3c"/></pattern></defs><rect width="458" height="278" fill="#0b0b0b"/><rect width="458" height="278" fill="url(#dp)"/><line x1="29.5" y1="0" x2="29.5" y2="278" stroke="#1f1f1f" stroke-width="1" /><line x1="147.3" y1="0" x2="147.3" y2="278" stroke="#1f1f1f" stroke-width="1" /><line x1="382.70000000000005" y1="0" x2="382.70000000000005" y2="278" stroke="#1f1f1f" stroke-width="1" /><line x1="0" y1="44.599999999999994" x2="458" y2="112.19999999999999" stroke="#2e6e62" stroke-width="0.95" /><line x1="0" y1="176" x2="458" y2="243.5" stroke="#2e2e2e" stroke-width="1" /><line x1="265.3" y1="0" x2="265.3" y2="278" stroke="#22504a" stroke-width="1" /><path d="M265.2 83.9 Q274.2 84.5 280.7 86.5" stroke="#d02828" stroke-width="1.6" fill="none"/><path d="M265.2 83.9 Q259.2 86.1 253.2 89.30000000000001" stroke="#38b040" stroke-width="1.4" fill="none"/><line x1="265.2" y1="83.9" x2="265.2" y2="100.4" stroke="#98e8e8" stroke-width="1.6" /><circle cx="286.2" cy="87.1" r="1.1" fill="#8a2020"/><circle cx="252.2" cy="89.9" r="0.9" fill="#307030"/><line x1="265.2" y1="103.4" x2="265.2" y2="106.9" stroke="#68c0c0" stroke-width="1.3" /><path d="M26.900000000000006 223.89999999999998 Q35.900000000000006 224.5 42.400000000000006 226.5" stroke="#d02828" stroke-width="1.6" fill="none"/><path d="M26.900000000000006 223.89999999999998 Q20.900000000000006 226.09999999999997 14.900000000000006 229.29999999999995" stroke="#38b040" stroke-width="1.4" fill="none"/><line x1="26.900000000000006" y1="223.89999999999998" x2="26.900000000000006" y2="240.39999999999998" stroke="#98e8e8" stroke-width="1.6" /><circle cx="47.900000000000006" cy="227.09999999999997" r="1.1" fill="#8a2020"/><circle cx="13.900000000000006" cy="229.89999999999998" r="0.9" fill="#307030"/><line x1="26.900000000000006" y1="243.39999999999998" x2="26.900000000000006" y2="246.89999999999998" stroke="#68c0c0" stroke-width="1.3" /></svg>
<div class="a" style="left:137px;top:330px;width:461px;height:114px;background:#dfe4eb"></div>
<div class="a" style="left:139px;top:333px;width:459px;height:10px;background:#cdd2d9"></div>
<div class="t" style="left:141.5px;top:335px;"><span style="font-size:5.5px;line-height:5.5px;vertical-align:top;color:#666;display:inline-block;margin-right:1.5px">1.1</span><i class="cj g3" style="width:5.5px;height:5.5px;margin-right:0.6px;color:#555;opacity:0.6"></i><i class="cj g0" style="width:5.5px;height:5.5px;margin-right:0.6px;color:#555;opacity:0.6"></i></div>
<svg class="a" style="left:0;top:0" width="600" height="457"><rect x="582.5" y="335.5" width="3" height="3" fill="none" stroke="#666" stroke-width="0.8"/><path d="M581.5 338.5 h5 M584 338.5 v2" stroke="#666" stroke-width="0.8"/></svg>
<svg class="a" style="left:0;top:0" width="600" height="457"><path d="M588.8 335.8 L593.2 340.2 M593.2 335.8 L588.8 340.2" stroke="#555" stroke-width="0.9"/></svg>
<div class="a" style="left:139px;top:343px;width:459px;height:12px;background:linear-gradient(#f0f2f5,#e8ebef)"></div>
<svg class="a" style="left:0;top:330px" width="600" height="30" viewBox="0 330 600 30"><rect x="146" y="345.5" width="7" height="8" fill="#f4f4f4" stroke="#a0a0a0" stroke-width="0.6"/><rect x="146.5" y="346.0" width="6" height="2" fill="#2a3a6a"/><path d="M146.5 353.0 V350.5 q3 -2 6 0 V353.0 z" fill="#48a848"/><rect x="157" y="345.5" width="7" height="8" fill="#e8eef8" stroke="#8090b0" stroke-width="0.6"/><rect x="157.5" y="346.0" width="6" height="2" fill="#2a3a6a"/><rect x="159" y="349.0" width="4" height="3" fill="#3a5aa0"/><path d="M168 346.5 H175 M171.5 346.5 V352.5" stroke="#b0b8c0" stroke-width="1.5"/><rect x="178" y="345.5" width="6" height="7" rx="1" fill="#f0e0e4" stroke="#c8a8b0" stroke-width="0.7" opacity="0.8"/><rect x="190" y="345.5" width="6" height="7" rx="1" fill="#f0e0e4" stroke="#d0a8b0" stroke-width="0.7" opacity="0.7"/><rect x="199" y="344" width="0.8" height="10" fill="#c8ccd4"/><rect x="203" y="345.5" width="7" height="7" fill="#dce4f0" stroke="#90a0c0" stroke-width="0.6"/><path d="M204 349 h5" stroke="#4a70b0" stroke-width="1.3"/><path d="M204 349 l2 -2 v4 z" fill="#4a70b0"/><rect x="215" y="345.5" width="7" height="7" fill="#dce4f0" stroke="#90a0c0" stroke-width="0.6"/><path d="M216 349 h5" stroke="#4a70b0" stroke-width="1.3"/><path d="M216 349 l2 -2 v4 z" fill="#4a70b0"/><rect x="224" y="344" width="0.8" height="10" fill="#c8ccd4"/><circle cx="254.0" cy="349" r="2.4" fill="#f0f4f8" stroke="#8098c0" stroke-width="1.2"/><rect x="260" y="344" width="0.8" height="10" fill="#c8ccd4"/><rect x="265" y="345.5" width="7" height="7" rx="1" fill="#e0e4f0" stroke="#a0b0d0" stroke-width="0.7" opacity="0.7"/><rect x="272" y="345.5" width="7" height="7" rx="1" fill="#e0e4f0" stroke="#a0b0d0" stroke-width="0.7" opacity="0.7"/><rect x="283" y="345.5" width="7" height="7" rx="1" fill="#e0e4f0" stroke="#a0b0d0" stroke-width="0.7" opacity="0.7"/><path d="M297 345.5 L304 352.5 M304 345.5 L297 352.5" stroke="#b0b8c8" stroke-width="1.1" opacity="0.8"/><rect x="310" y="344" width="0.8" height="10" fill="#c8ccd4"/><rect x="315" y="348" width="6" height="2" fill="#e0a0a8"/><rect x="317" y="350.5" width="2" height="1.5" fill="#f0d0d0"/><rect x="325" y="348" width="7" height="2" fill="#e0a0a8"/><rect x="327" y="350.5" width="3" height="1.5" fill="#f0d0d0"/><rect x="335" y="348" width="7" height="2" fill="#e0b0b0"/><rect x="337" y="350.5" width="3" height="1.5" fill="#f0d8d8"/><rect x="346" y="344" width="0.8" height="10" fill="#c8ccd4"/><rect x="350" y="345.5" width="7" height="7" rx="1" fill="#f4ecc0" stroke="#c0b070" stroke-width="0.7"/><rect x="362" y="346.5" width="7" height="6" fill="#6080c0"/><rect x="363" y="348.0" width="5" height="1.5" fill="#e8eef8"/><rect x="363" y="350.5" width="5" height="1" fill="#e8eef8"/><rect x="372" y="344" width="0.8" height="10" fill="#c8ccd4"/><rect x="376" y="345.5" width="8" height="7" rx="1" fill="#f0ecd8" stroke="#c8c0a0" stroke-width="0.7" opacity="0.8"/><rect x="388" y="346.5" width="8" height="4" rx="1" fill="#504838"/><rect x="389" y="350.0" width="6" height="2.5" fill="#e0c870"/><path d="M399 351.5 c1 -5 5 -6 5 -3 c0 2 -3 3 -4 3 h4" stroke="#4a6888" stroke-width="1.2" fill="none"/><rect x="410" y="345.5" width="7" height="7.5" fill="#40a040" stroke="#206020" stroke-width="0.7"/><rect x="411.8" y="347.3" width="3.4" height="4" fill="#e8f8e8"/><rect x="420" y="345.5" width="7" height="7" rx="1" fill="#606068" stroke="#303038" stroke-width="0.7"/><rect x="431" y="344" width="0.8" height="10" fill="#c8ccd4"/><rect x="436" y="347.5" width="7" height="4" rx="1" fill="#a8a8b4"/><rect x="437.5" y="345.5" width="4" height="3" fill="#f4f4f4" stroke="#909090" stroke-width="0.5"/><rect x="438" y="350.5" width="5" height="2.5" fill="#6070a0"/><path d="M449.5 345.5 q-1.5 0 -1.8 2 l-1 5.5 q-0.3 1.5 -1.5 1.3 M446.8 348.1 h2.6" stroke="#202020" stroke-width="0.9" fill="none"/><path d="M449.6 349.5 l2.2 3 M451.8 349.5 l-2.2 3" stroke="#202020" stroke-width="0.7"/><path d="M464 345.5 L458 352.5" stroke="#d06070" stroke-width="0.9"/><circle cx="459.5" cy="347.0" r="1.2" fill="none" stroke="#d06070" stroke-width="0.7"/><circle cx="462.5" cy="351.0" r="1.2" fill="none" stroke="#d06070" stroke-width="0.7"/></svg>
<div class="a" style="left:226px;top:343.5px;width:10px;height:11px;background:#f6e2a0;border:1px solid #e8b850;border-radius:1px"></div>
<div class="a" style="left:237px;top:343.5px;width:10px;height:11px;background:#f6e2a0;border:1px solid #e8b850;border-radius:1px"></div>
<svg class="a" style="left:0;top:330px" width="600" height="30" viewBox="0 330 600 30"><path d="M229 346 q4 1 3 6 l-2 1" stroke="#5a4020" stroke-width="1.5" fill="none"/><path d="M243 346 q-4 1 -3 6 l2 1" stroke="#5a4020" stroke-width="1.5" fill="none"/></svg>
<div class="a" style="left:140px;top:355px;width:458px;height:72px;background:#f4f4f4;border:1px solid #a8a8a8;border-right:none"></div><div class="a" style="left:141px;top:356px;width:447.5px;height:22px;background:#f0f0f0;border-bottom:1px solid #8c8c8c"></div><div class="a" style="left:167px;top:356px;width:421.5px;height:8px;background:#e6e6e6;border-bottom:1px solid #b4b4b4"></div><div class="a" style="left:167px;top:357px;width:41px;height:6px;background:#1f74d0"></div><div class="a" style="left:167px;top:378px;width:228px;height:43px;background:#fff"></div><div class="a" style="left:395px;top:378px;width:193.5px;height:43px;background:#efefef"></div><div class="a" style="left:141px;top:378px;width:26px;height:7px;background:#1f74d0;border-bottom:1px solid #7a7a7a;border-right:1px solid #7a7a7a"></div><div class="t" style="left:141px;top:379px;width:26px;text-align:center;font-size:6px;line-height:5.5px;font-weight:bold;color:#fff">1</div><div class="a" style="left:167px;top:384px;width:421.5px;height:1px;background:#d4d4d4"></div><div class="a" style="left:141px;top:385px;width:26px;height:7px;background:#e2e2e2;border-bottom:1px solid #7a7a7a;border-right:1px solid #7a7a7a"></div><div class="t" style="left:141px;top:386px;width:26px;text-align:center;font-size:6px;line-height:5.5px;font-weight:bold;color:#222">2</div><div class="a" style="left:167px;top:391px;width:421.5px;height:1px;background:#d4d4d4"></div><div class="a" style="left:141px;top:392px;width:26px;height:8px;background:#e2e2e2;border-bottom:1px solid #7a7a7a;border-right:1px solid #7a7a7a"></div><div class="t" style="left:141px;top:393px;width:26px;text-align:center;font-size:6px;line-height:5.5px;font-weight:bold;color:#222">3</div><div class="a" style="left:167px;top:399px;width:421.5px;height:1px;background:#d4d4d4"></div><div class="a" style="left:141px;top:400px;width:26px;height:7px;background:#e2e2e2;border-bottom:1px solid #7a7a7a;border-right:1px solid #7a7a7a"></div><div class="t" style="left:141px;top:401px;width:26px;text-align:center;font-size:6px;line-height:5.5px;font-weight:bold;color:#222">4</div><div class="a" style="left:167px;top:406px;width:421.5px;height:1px;background:#d4d4d4"></div><div class="a" style="left:141px;top:407px;width:26px;height:7px;background:#e2e2e2;border-bottom:1px solid #7a7a7a;border-right:1px solid #7a7a7a"></div><div class="t" style="left:141px;top:408px;width:26px;text-align:center;font-size:6px;line-height:5.5px;font-weight:bold;color:#222">5</div><div class="a" style="left:167px;top:413px;width:421.5px;height:1px;background:#d4d4d4"></div><div class="a" style="left:141px;top:414px;width:26px;height:7px;background:#e2e2e2;border-bottom:1px solid #7a7a7a;border-right:1px solid #7a7a7a"></div><div class="t" style="left:141px;top:415px;width:26px;text-align:center;font-size:6px;line-height:5.5px;font-weight:bold;color:#222">6</div><div class="a" style="left:167px;top:420px;width:421.5px;height:1px;background:#d4d4d4"></div><div class="a" style="left:167px;top:356px;width:1px;height:65px;background:#b8b8b8"></div><div class="a" style="left:208px;top:356px;width:1px;height:65px;background:#b8b8b8"></div><div class="a" style="left:260px;top:356px;width:1px;height:65px;background:#b8b8b8"></div><div class="a" style="left:306px;top:356px;width:1px;height:7px;background:#b8b8b8"></div><div class="a" style="left:306px;top:369px;width:1px;height:52px;background:#b8b8b8"></div><div class="a" style="left:351px;top:356px;width:1px;height:7px;background:#b8b8b8"></div><div class="a" style="left:351px;top:369px;width:1px;height:52px;background:#b8b8b8"></div><div class="a" style="left:395px;top:356px;width:1px;height:65px;background:#b8b8b8"></div><div class="a" style="left:395px;top:356px;width:1px;height:65px;background:#a0a0a0"></div><div class="t" style="left:167px;top:358px;width:41px;text-align:center;font-size:5px;line-height:5px;color:#fff">A</div><div class="t" style="left:208px;top:358px;width:52px;text-align:center;font-size:5px;line-height:5px;color:#555">B</div><div class="t" style="left:260px;top:358px;width:46px;text-align:center;font-size:5px;line-height:5px;color:#555">C</div><div class="t" style="left:306px;top:358px;width:45px;text-align:center;font-size:5px;line-height:5px;color:#555">D</div><div class="t" style="left:351px;top:358px;width:44px;text-align:center;font-size:5px;line-height:5px;color:#555">E</div><div class="t" style="left:395px;top:358px;width:193.5px;text-align:center;font-size:5px;line-height:5px;color:#555">F</div><div class="t" style="left:141px;top:362.3px;width:26px;text-align:center;line-height:5.5px"><i class="cj g1" style="width:5.8px;height:5.8px;margin-right:0.5px;color:#1a1a1a;opacity:0.75"></i><i class="cj g2" style="width:5.8px;height:5.8px;margin-right:0.5px;color:#1a1a1a;opacity:0.75"></i></div><div class="t" style="left:141px;top:368.8px;width:26px;text-align:center;line-height:5.5px"><i class="cj g3" style="width:5.8px;height:5.8px;margin-right:0.5px;color:#1a1a1a;opacity:0.75"></i><i class="cj g0" style="width:5.8px;height:5.8px;margin-right:0.5px;color:#1a1a1a;opacity:0.75"></i></div><div class="t" style="left:167px;top:363px;width:41px;text-align:center;line-height:5.5px"><i class="cj g1" style="width:5.8px;height:5.8px;margin-right:0.5px;color:#1a1a1a;opacity:0.75"></i><i class="cj g2" style="width:5.8px;height:5.8px;margin-right:0.5px;color:#1a1a1a;opacity:0.75"></i></div><div class="t" style="left:167px;top:370px;width:41px;text-align:center;line-height:5.5px"><i class="cj g3" style="width:5.8px;height:5.8px;margin-right:0.5px;color:#1a1a1a;opacity:0.75"></i><i class="cj g0" style="width:5.8px;height:5.8px;margin-right:0.5px;color:#1a1a1a;opacity:0.75"></i></div><div class="t" style="left:208px;top:363px;width:52px;text-align:center;line-height:5.5px"><i class="cj g1" style="width:5.8px;height:5.8px;margin-right:0.5px;color:#1a1a1a;opacity:0.75"></i><i class="cj g2" style="width:5.8px;height:5.8px;margin-right:0.5px;color:#1a1a1a;opacity:0.75"></i></div><div class="t" style="left:208px;top:370px;width:52px;text-align:center;line-height:5.5px"><i class="cj g3" style="width:5.8px;height:5.8px;margin-right:0.5px;color:#1a1a1a;opacity:0.75"></i><i class="cj g0" style="width:5.8px;height:5.8px;margin-right:0.5px;color:#1a1a1a;opacity:0.75"></i></div><div class="t" style="left:306px;top:363px;width:45px;text-align:center;line-height:5px"><i class="cj g1" style="width:5.2px;height:5.2px;margin-right:0.5px;color:#2a2a2a;opacity:0.62"></i><i class="cj g2" style="width:5.2px;height:5.2px;margin-right:0.5px;color:#2a2a2a;opacity:0.62"></i><i class="cj g3" style="width:5.2px;height:5.2px;margin-right:0.5px;color:#2a2a2a;opacity:0.62"></i><i class="cj g0" style="width:5.2px;height:5.2px;margin-right:0.5px;color:#2a2a2a;opacity:0.62"></i></div><div class="t" style="left:395px;top:369.5px;width:193px;text-align:center;line-height:5.5px"><i class="cj g1" style="width:5.8px;height:5.8px;margin-right:0.5px;color:#1a1a1a;opacity:0.75"></i><i class="cj g2" style="width:5.8px;height:5.8px;margin-right:0.5px;color:#1a1a1a;opacity:0.75"></i></div><div class="t" style="left:260px;top:370px;width:46px;text-align:center;font-size:5.3px;line-height:5px;color:#333;font-family:Liberation Mono">X [m]</div><div class="t" style="left:306px;top:370px;width:45px;text-align:center;font-size:5.3px;line-height:5px;color:#333;font-family:Liberation Mono">Y [m]</div><div class="t" style="left:351px;top:370px;width:44px;text-align:center;font-size:5.3px;line-height:5px;color:#333;font-family:Liberation Mono">Z [m]</div><div class="a" style="left:167px;top:377.5px;width:41.5px;height:8px;border:1px solid #8a8a8a;background:#fff"></div><div class="a" style="left:588.5px;top:356px;width:9px;height:70px;background:#eeeeee"></div><div class="a" style="left:589.5px;top:365px;width:7px;height:47px;background:#cfcfcf"></div><svg class="a" style="left:0;top:0" width="600" height="457"><path d="M591.25 361.5 L593 359.5 L594.75 361.5" stroke="#555" stroke-width="1.1" fill="none"/></svg><svg class="a" style="left:0;top:0" width="600" height="457"><path d="M591.25 416.5 L593 418.5 L594.75 416.5" stroke="#555" stroke-width="1.1" fill="none"/></svg>
<div class="a" style="left:139px;top:427px;width:459px;height:17px;background:#eef0f3"></div>
<div class="a" style="left:139px;top:426px;width:459px;height:1px;background:#a8a8a8"></div>
<div class="a" style="left:140.7px;top:426px;width:14.0px;height:9px;background:#fcfcfc;border:1px solid #c8c8c8;border-top:none;border-bottom:1px solid #707070"></div>
<div class="t" style="left:140.7px;top:428.3px;width:14.0px;text-align:center;line-height:5.5px"><i class="cj g3" style="width:5.7px;height:5.6px;margin-right:0.5px;color:#111;opacity:0.82"></i><i class="cj g0" style="width:5.7px;height:5.6px;margin-right:0.5px;color:#111;opacity:0.82"></i></div>
<div class="a" style="left:156px;top:427px;width:15.300000000000011px;height:8px;background:#e8e8e8;border:1px solid #7c7c7c;border-top:none"></div>
<div class="t" style="left:156px;top:428.3px;width:15.300000000000011px;text-align:center;line-height:5.5px"><i class="cj g1" style="width:5.7px;height:5.6px;margin-right:0.5px;color:#111;opacity:0.82"></i><i class="cj g2" style="width:5.7px;height:5.6px;margin-right:0.5px;color:#111;opacity:0.82"></i></div>
<div class="a" style="left:172px;top:427px;width:15.5px;height:8px;background:#e8e8e8;border:1px solid #7c7c7c;border-top:none"></div>
<div class="t" style="left:172px;top:428.3px;width:15.5px;text-align:center;line-height:5.5px"><i class="cj g3" style="width:5.7px;height:5.6px;margin-right:0.5px;color:#111;opacity:0.82"></i><i class="cj g0" style="width:5.7px;height:5.6px;margin-right:0.5px;color:#111;opacity:0.82"></i></div>
<div class="a" style="left:188.7px;top:427px;width:21.80000000000001px;height:8px;background:#e8e8e8;border:1px solid #7c7c7c;border-top:none"></div>
<div class="t" style="left:188.7px;top:428.3px;width:21.80000000000001px;text-align:center;line-height:5.5px"><i class="cj g1" style="width:5.7px;height:5.6px;margin-right:0.5px;color:#111;opacity:0.82"></i><i class="cj g2" style="width:5.7px;height:5.6px;margin-right:0.5px;color:#111;opacity:0.82"></i><i class="cj g3" style="width:5.7px;height:5.6px;margin-right:0.5px;color:#111;opacity:0.82"></i></div>
<div class="a" style="left:211.5px;top:427px;width:28.0px;height:8px;background:#e8e8e8;border:1px solid #7c7c7c;border-top:none"></div>
<div class="t" style="left:211.5px;top:428.3px;width:28.0px;text-align:center;line-height:5.5px"><i class="cj g0" style="width:5.7px;height:5.6px;margin-right:0.5px;color:#111;opacity:0.82"></i><i class="cj g1" style="width:5.7px;height:5.6px;margin-right:0.5px;color:#111;opacity:0.82"></i><i class="cj g2" style="width:5.7px;height:5.6px;margin-right:0.5px;color:#111;opacity:0.82"></i><i class="cj g3" style="width:5.7px;height:5.6px;margin-right:0.5px;color:#111;opacity:0.82"></i></div>
<div class="a" style="left:240.5px;top:427px;width:25.0px;height:8px;background:#e8e8e8;border:1px solid #7c7c7c;border-top:none"></div>
<div class="t" style="left:240.5px;top:428.3px;width:25.0px;text-align:center;line-height:5.5px"><i class="cj g0" style="width:5.7px;height:5.6px;margin-right:0.5px;color:#111;opacity:0.82"></i><i class="cj g1" style="width:5.7px;height:5.6px;margin-right:0.5px;color:#111;opacity:0.82"></i><i class="cj g2" style="width:5.7px;height:5.6px;margin-right:0.5px;color:#111;opacity:0.82"></i><i class="cj g3" style="width:5.7px;height:5.6px;margin-right:0.5px;color:#111;opacity:0.82"></i></div>
<div class="a" style="left:266.5px;top:427px;width:16.0px;height:8px;background:#e8e8e8;border:1px solid #7c7c7c;border-top:none"></div>
<div class="t" style="left:266.5px;top:428.3px;width:16.0px;text-align:center;line-height:5.5px"><i class="cj g0" style="width:5.7px;height:5.6px;margin-right:0.5px;color:#111;opacity:0.82"></i><i class="cj g1" style="width:5.7px;height:5.6px;margin-right:0.5px;color:#111;opacity:0.82"></i></div>
<div class="a" style="left:283.5px;top:427px;width:27.0px;height:8px;background:#e8e8e8;border:1px solid #7c7c7c;border-top:none"></div>
<div class="t" style="left:283.5px;top:428.3px;width:27.0px;text-align:center;line-height:5.5px"><i class="cj g2" style="width:5.7px;height:5.6px;margin-right:0.5px;color:#111;opacity:0.82"></i><i class="cj g3" style="width:5.7px;height:5.6px;margin-right:0.5px;color:#111;opacity:0.82"></i><i class="cj g0" style="width:5.7px;height:5.6px;margin-right:0.5px;color:#111;opacity:0.82"></i><i class="cj g1" style="width:5.7px;height:5.6px;margin-right:0.5px;color:#111;opacity:0.82"></i></div>
<div class="a" style="left:311.5px;top:427px;width:39.0px;height:8px;background:#e8e8e8;border:1px solid #7c7c7c;border-top:none"></div>
<div class="t" style="left:311.5px;top:428.3px;width:39.0px;text-align:center;line-height:5.5px"><i class="cj g2" style="width:5.7px;height:5.6px;margin-right:0.5px;color:#111;opacity:0.82"></i><i class="cj g3" style="width:5.7px;height:5.6px;margin-right:0.5px;color:#111;opacity:0.82"></i><i class="cj g0" style="width:5.7px;height:5.6px;margin-right:0.5px;color:#111;opacity:0.82"></i><i class="cj g1" style="width:5.7px;height:5.6px;margin-right:0.5px;color:#111;opacity:0.82"></i><i class="cj g2" style="width:5.7px;height:5.6px;margin-right:0.5px;color:#111;opacity:0.82"></i><i class="cj g3" style="width:5.7px;height:5.6px;margin-right:0.5px;color:#111;opacity:0.82"></i></div>
<div class="a" style="left:351.5px;top:427px;width:33.0px;height:8px;background:#e8e8e8;border:1px solid #7c7c7c;border-top:none"></div>
<div class="t" style="left:351.5px;top:428.3px;width:33.0px;text-align:center;line-height:5.5px"><i class="cj g0" style="width:5.7px;height:5.6px;margin-right:0.5px;color:#111;opacity:0.82"></i><i class="cj g1" style="width:5.7px;height:5.6px;margin-right:0.5px;color:#111;opacity:0.82"></i><i class="cj g2" style="width:5.7px;height:5.6px;margin-right:0.5px;color:#111;opacity:0.82"></i><i class="cj g3" style="width:5.7px;height:5.6px;margin-right:0.5px;color:#111;opacity:0.82"></i><i class="cj g0" style="width:5.7px;height:5.6px;margin-right:0.5px;color:#111;opacity:0.82"></i></div>
<div class="a" style="left:385.5px;top:427px;width:22.0px;height:8px;background:#e8e8e8;border:1px solid #7c7c7c;border-top:none"></div>
<div class="t" style="left:385.5px;top:428.3px;width:22.0px;text-align:center;line-height:5.5px"><i class="cj g1" style="width:5.7px;height:5.6px;margin-right:0.5px;color:#111;opacity:0.82"></i><i class="cj g2" style="width:5.7px;height:5.6px;margin-right:0.5px;color:#111;opacity:0.82"></i><i class="cj g3" style="width:5.7px;height:5.6px;margin-right:0.5px;color:#111;opacity:0.82"></i></div>
<div class="a" style="left:1px;top:444px;width:597px;height:9px;background:linear-gradient(#e2e5ea,#b0b5bd)"></div>
<div class="a" style="left:442px;top:445px;width:1px;height:8px;background:#c4c8ce"></div>
<div class="a" style="left:484px;top:445px;width:1px;height:8px;background:#c4c8ce"></div>
<div class="a" style="left:518px;top:445px;width:1px;height:8px;background:#c4c8ce"></div>
<div class="a" style="left:556px;top:445px;width:1px;height:8px;background:#c4c8ce"></div>
<div class="a" style="left:233px;top:445px;width:17.30000000000001px;height:8px;border:1px solid #5c6068;border-bottom:none;background:linear-gradient(#dfe2e6,#c4c8ce)"></div>
<div class="t" style="left:235px;top:447.5px;line-height:5px"><i class="cj g0" style="width:4.8px;height:4.8px;margin-right:0.6px;color:#111;opacity:0.85"></i><i class="cj g1" style="width:4.8px;height:4.8px;margin-right:0.6px;color:#111;opacity:0.85"></i></div>
<div class="a" style="left:250.3px;top:445px;width:17.399999999999977px;height:8px;border:1px solid #5c6068;border-bottom:none;background:linear-gradient(#dfe2e6,#c4c8ce)"></div>
<div class="t" style="left:252.3px;top:447.5px;line-height:5px"><i class="cj g2" style="width:4.8px;height:4.8px;margin-right:0.6px;color:#111;opacity:0.85"></i><i class="cj g3" style="width:4.8px;height:4.8px;margin-right:0.6px;color:#111;opacity:0.85"></i></div>
<div class="a" style="left:267.7px;top:445px;width:29.80000000000001px;height:8px;border:1px solid #5c6068;border-bottom:none;background:linear-gradient(#dfe2e6,#c4c8ce)"></div>
<div class="t" style="left:269.7px;top:447.5px;line-height:5px"><i class="cj g0" style="width:4.8px;height:4.8px;margin-right:0.6px;color:#111;opacity:0.85"></i><i class="cj g1" style="width:4.8px;height:4.8px;margin-right:0.6px;color:#111;opacity:0.85"></i><i class="cj g2" style="width:4.8px;height:4.8px;margin-right:0.6px;color:#111;opacity:0.85"></i></div>
<div class="a" style="left:297.5px;top:445px;width:30.5px;height:8px;border:1px solid #5c6068;border-bottom:none;background:linear-gradient(#dfe2e6,#c4c8ce)"></div>
<div class="t" style="left:299.5px;top:447.5px;line-height:5px"><i class="cj g3" style="width:4.8px;height:4.8px;margin-right:0.6px;color:#111;opacity:0.85"></i><i class="cj g0" style="width:4.8px;height:4.8px;margin-right:0.6px;color:#111;opacity:0.85"></i><i class="cj g1" style="width:4.8px;height:4.8px;margin-right:0.6px;color:#111;opacity:0.85"></i><i class="cj g2" style="width:4.8px;height:4.8px;margin-right:0.6px;color:#111;opacity:0.85"></i></div>
<div class="a" style="left:328px;top:445px;width:24px;height:8px;border:1px solid #5c6068;border-bottom:none;background:linear-gradient(#dfe2e6,#c4c8ce)"></div>
<div class="t" style="left:330px;top:447.5px;line-height:5px"><i class="cj g3" style="width:4.8px;height:4.8px;margin-right:0.6px;color:#111;opacity:0.85"></i><i class="cj g0" style="width:4.8px;height:4.8px;margin-right:0.6px;color:#111;opacity:0.85"></i><i class="cj g1" style="width:4.8px;height:4.8px;margin-right:0.6px;color:#111;opacity:0.85"></i></div>
<div class="a" style="left:352px;top:445px;width:14px;height:8px;border:1px solid #5c6068;border-bottom:none;background:linear-gradient(#dfe2e6,#c4c8ce)"></div>
<div class="t" style="left:354px;top:447.5px;line-height:5px"><span style="font-size:5px;line-height:5px;color:#444">DXF</span></div>
</div></body></html>
